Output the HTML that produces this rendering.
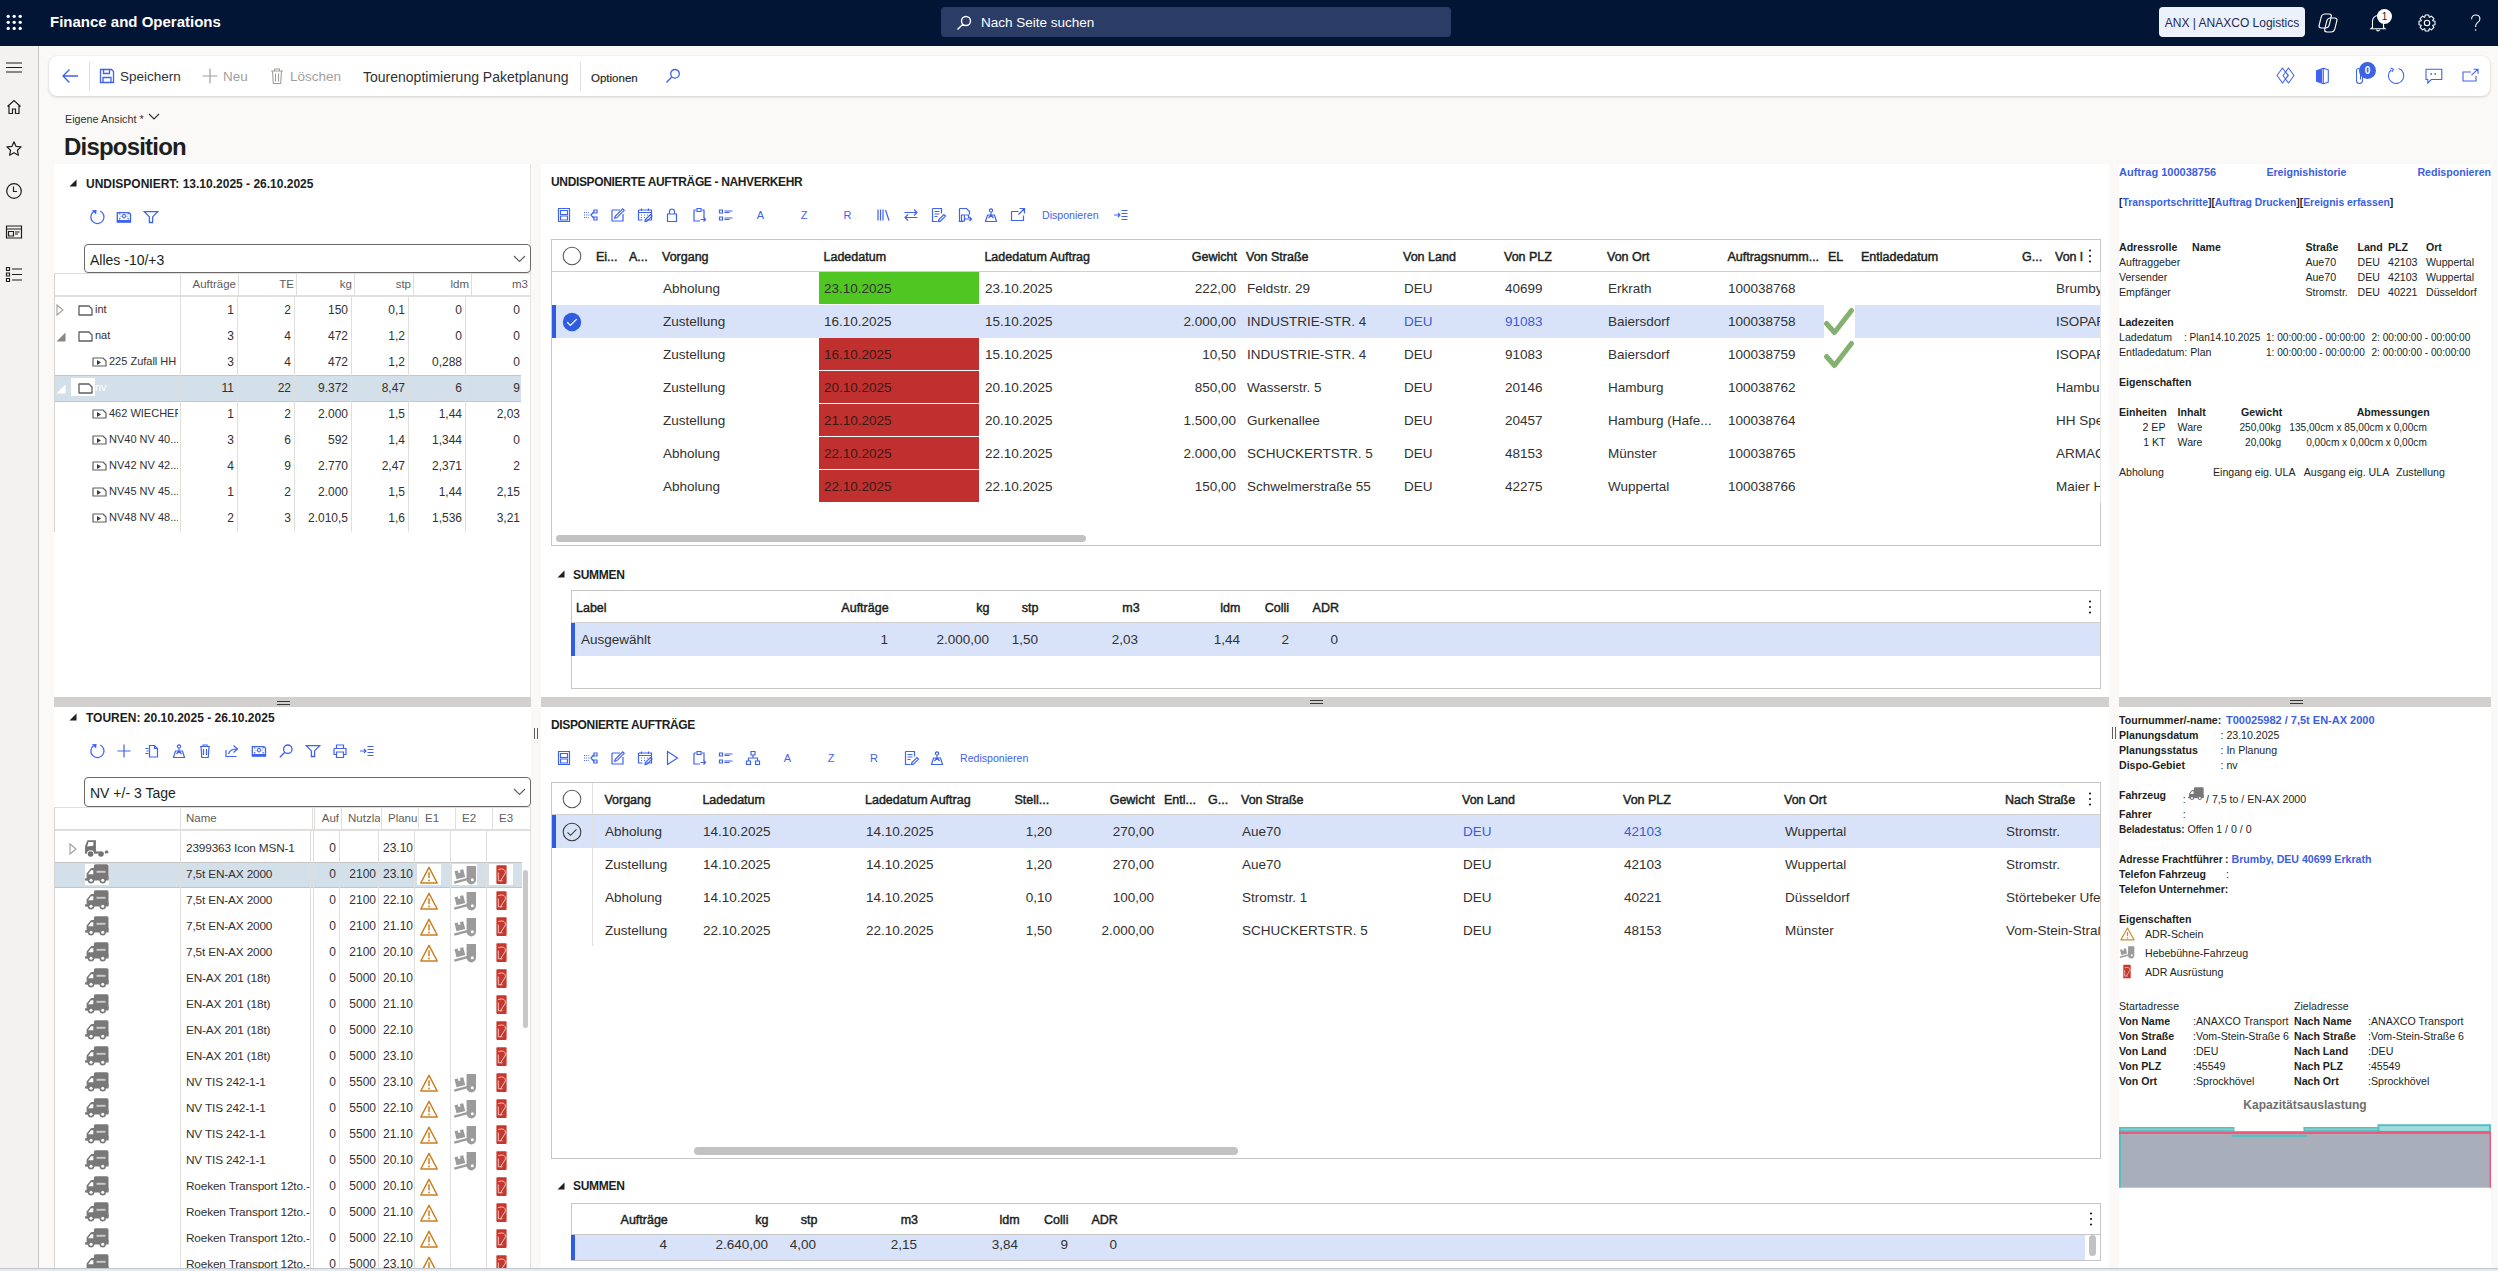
<!DOCTYPE html><html><head><meta charset="utf-8"><style>
html,body{margin:0;padding:0;}
body{width:2498px;height:1271px;overflow:hidden;position:relative;background:#faf9f8;font-family:"Liberation Sans",sans-serif;color:#323130;}
.a{position:absolute;}
.t{white-space:nowrap;}
svg.a{overflow:visible;}
</style></head><body>
<div class="a" style="left:0px;top:0px;width:2498px;height:46px;background:#021535;"></div>
<svg class="a" style="left:0px;top:0px" width="30" height="40" viewBox="0 0 30 40"><circle cx="8.2" cy="16.3" r="1.65" fill="#fff"/><circle cx="8.2" cy="22.3" r="1.65" fill="#fff"/><circle cx="8.2" cy="28.4" r="1.65" fill="#fff"/><circle cx="14.2" cy="16.3" r="1.65" fill="#fff"/><circle cx="14.2" cy="22.3" r="1.65" fill="#fff"/><circle cx="14.2" cy="28.4" r="1.65" fill="#fff"/><circle cx="20.2" cy="16.3" r="1.65" fill="#fff"/><circle cx="20.2" cy="22.3" r="1.65" fill="#fff"/><circle cx="20.2" cy="28.4" r="1.65" fill="#fff"/></svg>
<div class="a t" style="top:11.5px;line-height:20px;font-size:15px;font-weight:700;color:#ffffff;left:50px;">Finance and Operations</div>
<div class="a" style="left:941px;top:7px;width:510px;height:30px;background:#2b3c66;border-radius:4px;"></div>
<svg class="a" style="left:955px;top:14px" width="18" height="18" viewBox="0 0 18 18"><path d="M11 2.5a4.5 4.5 0 1 1 0 9a4.5 4.5 0 1 1 0-9zM7.8 10.2L2.5 15.5" fill="none" stroke="#fff" stroke-width="1.4"/></svg>
<div class="a t" style="top:12.5px;line-height:20px;font-size:13.5px;color:#ffffff;left:981px;">Nach Seite suchen</div>
<div class="a" style="left:2159px;top:7px;width:146px;height:30px;background:#ecf1fb;border-radius:4px;"></div>
<div class="a t" style="top:12.5px;line-height:20px;font-size:12px;color:#1d2a5c;left:1932px;width:600px;text-align:center;">ANX | ANAXCO Logistics</div>
<svg class="a" style="left:2319px;top:13px" width="22" height="20" viewBox="0 0 22 20"><g fill="none" stroke="#fff" stroke-width="1.15"><rect x="3.2" y="1" width="10" height="14" rx="3" transform="skewX(-14)"/><rect x="9.8" y="5" width="10" height="14" rx="3" transform="skewX(-14)"/></g></svg>
<svg class="a" style="left:2368px;top:11px" width="20" height="22" viewBox="0 0 20 22"><path d="M4.5 16.5V10a5.5 5.5 0 0 1 11 0v6.5l1.5 1.3H3z" fill="none" stroke="#fff" stroke-width="1.1"/><path d="M8.6 18.5a1.4 1.4 0 0 0 2.8 0" fill="none" stroke="#fff" stroke-width="1.1"/></svg>
<div class="a" style="left:2377px;top:9px;width:15px;height:15px;border-radius:50%;background:#fff;color:#1b1b1b;font-size:10px;line-height:15px;text-align:center">1</div>
<svg class="a" style="left:2417.4px;top:13px" width="20" height="20" viewBox="0 0 20 20"><path d="M18.00 8.21L18.00 11.79L15.80 12.18L15.65 12.56L16.92 14.39L14.39 16.92L12.56 15.65L12.18 15.80L11.79 18.00L8.21 18.00L7.82 15.80L7.44 15.65L5.61 16.92L3.08 14.39L4.35 12.56L4.20 12.18L2.00 11.79L2.00 8.21L4.20 7.82L4.35 7.44L3.08 5.61L5.61 3.08L7.44 4.35L7.82 4.20L8.21 2.00L11.79 2.00L12.18 4.20L12.56 4.35L14.39 3.08L16.92 5.61L15.65 7.44L15.80 7.82z" fill="none" stroke="#fff" stroke-width="1.1" stroke-linejoin="round"/><circle cx="10" cy="10" r="2.7" fill="none" stroke="#fff" stroke-width="1.1"/></svg>
<svg class="a" style="left:2470px;top:14px" width="12" height="18" viewBox="0 0 12 18"><path d="M1.6 5.2C1.6 2.6 3.4 1 5.7 1S9.9 2.6 9.9 5C9.9 7.2 8.4 8 7 9.1S5.6 11 5.6 13" fill="none" stroke="#fff" stroke-width="1.1"/><circle cx="5.6" cy="16" r="0.8" fill="#fff"/></svg>
<div class="a" style="left:0px;top:46px;width:39px;height:1225px;background:#f3f2f1;border-right:1px solid #c8c6c4;box-sizing:border-box;"></div>
<svg class="a" style="left:6px;top:60px" width="16" height="16" viewBox="0 0 16 16"><path d="M0 3h16M0 7.5h16M0 12h16" stroke="#201f1e" stroke-width="1.2"/></svg>
<svg class="a" style="left:6px;top:99px" width="16" height="16" viewBox="0 0 16 16"><path d="M1.5 7.5L8 1.5l6.5 6M3 6.5V14.5h3.5V10h3v4.5H13V6.5" fill="none" stroke="#201f1e" stroke-width="1.2"/></svg>
<svg class="a" style="left:5px;top:140px" width="18" height="18" viewBox="0 0 18 18"><path d="M9 1.8l2.1 4.6 5 .5-3.7 3.4 1 4.9L9 12.7l-4.4 2.5 1-4.9L1.9 6.9l5-.5z" fill="none" stroke="#201f1e" stroke-width="1.2" stroke-linejoin="round"/></svg>
<svg class="a" style="left:5px;top:182px" width="18" height="18" viewBox="0 0 18 18"><circle cx="9" cy="9" r="7.3" fill="none" stroke="#201f1e" stroke-width="1.2"/><path d="M8.5 4.5v5h3.5" fill="none" stroke="#201f1e" stroke-width="1.2"/></svg>
<svg class="a" style="left:5px;top:224px" width="18" height="16" viewBox="0 0 18 16"><path d="M1.5 2h15v12h-15zM1.5 5h15M3.5 7.5h5v4.5h-5zM10 8h4.5M10 10h3" fill="none" stroke="#201f1e" stroke-width="1.2"/></svg>
<svg class="a" style="left:5px;top:266px" width="18" height="17" viewBox="0 0 18 17"><path d="M1.5 1.5h3v3h-3zM1.5 7h3v3h-3zM1.5 12.5h3v3h-3zM7 3h10M7 8.5h10M7 14h10" fill="none" stroke="#201f1e" stroke-width="1.2"/></svg>
<div class="a" style="left:49px;top:56px;width:2441px;height:40px;background:#ffffff;border-radius:8px;box-shadow:0 1px 3px rgba(0,0,0,0.16),0 0 1px rgba(0,0,0,0.1);"></div>
<svg class="a" style="left:61px;top:68px" width="18" height="16" viewBox="0 0 18 16"><path d="M17 8H2M8.5 1.5L2 8l6.5 6.5" fill="none" stroke="#3f62ef" stroke-width="1.4"/></svg>
<div class="a" style="left:89px;top:62px;width:1px;height:29px;background:#e1dfdd;"></div>
<svg class="a" style="left:99px;top:68px" width="16" height="16" viewBox="0 0 16 16"><path d="M1.5 1.5h11l2 2v11h-13z" fill="none" stroke="#3f62ef" stroke-width="1.3"/><path d="M4.5 1.5v4h6v-4M4 14.5V9.5h8v5" fill="none" stroke="#3f62ef" stroke-width="1.3"/></svg>
<div class="a t" style="top:67.0px;line-height:20px;font-size:13.5px;color:#323130;left:120px;">Speichern</div>
<svg class="a" style="left:202px;top:68px" width="16" height="16" viewBox="0 0 16 16"><path d="M8 0.5v15M0.5 8h15" fill="none" stroke="#a19f9d" stroke-width="1.2"/></svg>
<div class="a t" style="top:67.0px;line-height:20px;font-size:13.5px;color:#a19f9d;left:223px;">Neu</div>
<svg class="a" style="left:270px;top:68px" width="14" height="16" viewBox="0 0 14 16"><path d="M1 3h12M4.5 3V1h5v2M2.5 3l.8 12.5h7.4L11.5 3M5.5 5.5v8M8.5 5.5v8" fill="none" stroke="#a19f9d" stroke-width="1.1"/></svg>
<div class="a t" style="top:67.0px;line-height:20px;font-size:13.5px;color:#a19f9d;left:290px;">Löschen</div>
<div class="a t" style="top:67.0px;line-height:20px;font-size:14px;color:#323130;left:363px;">Tourenoptimierung Paketplanung</div>
<div class="a" style="left:580px;top:62px;width:1px;height:29px;background:#e1dfdd;"></div>
<div class="a t" style="top:68.0px;line-height:20px;font-size:11.5px;color:#201f1e;left:591px;-webkit-text-stroke:0.15px #201f1e;">Optionen</div>
<svg class="a" style="left:665px;top:68px" width="16" height="16" viewBox="0 0 16 16"><path d="M10 1.5a4.3 4.3 0 1 1 0 8.6a4.3 4.3 0 1 1 0-8.6zM6.9 8.8L1.5 14.5" fill="none" stroke="#3f62ef" stroke-width="1.3"/></svg>
<svg class="a" style="left:2276px;top:67px" width="19" height="18" viewBox="0 0 19 18"><path d="M6.5 1L1 8.5l5.5 7.5 5.5-7.5zM12.5 1L7 8.5l5.5 7.5L18 8.5zM9.5 5l3 3.5-3 3.5" fill="none" stroke="#3f62ef" stroke-width="1.05" stroke-linejoin="round"/></svg>
<svg class="a" style="left:2315px;top:67px" width="15" height="18" viewBox="0 0 15 18"><path d="M1.5 3.8L8.3 1.2l5 1.6v12.4l-5 1.6-6.8-2.6z" fill="none" stroke="#3f62ef" stroke-width="1.1" stroke-linejoin="round"/><path d="M1.5 3.8L7.2 2v14L1.5 14.2z" fill="#3f62ef"/><path d="M8.3 1.2v15.6" stroke="#3f62ef" stroke-width="1.1"/></svg>
<svg class="a" style="left:2354px;top:67px" width="12" height="18" viewBox="0 0 12 18"><path d="M8.5 5v8.5a3 3 0 0 1-6 0V3.5a2 2 0 0 1 4 0v9" fill="none" stroke="#3f62ef" stroke-width="1.05"/></svg>
<div class="a" style="left:2359px;top:62px;width:17px;height:17px;border-radius:50%;background:#3d62e6;color:#fff;font-size:10px;line-height:17px;text-align:center;font-weight:700">0</div>
<svg class="a" style="left:2387px;top:67px" width="18" height="18" viewBox="0 0 18 18"><path d="M11.6 1.5A7.7 7.7 0 1 1 4.3 2.8" fill="none" stroke="#3f62ef" stroke-width="1.1"/><path d="M3.6 0.9l2.9 1.4-1.6 2.8" fill="none" stroke="#3f62ef" stroke-width="1.1"/></svg>
<svg class="a" style="left:2425px;top:68px" width="18" height="17" viewBox="0 0 18 17"><path d="M1 1.2h15.8v10.3H6.2l-3.4 3.6v-3.6H1z" fill="none" stroke="#3f62ef" stroke-width="1.1"/><path d="M6.2 5.2v1.6M10.2 5.2v1.6" stroke="#3f62ef" stroke-width="1.7"/></svg>
<svg class="a" style="left:2462px;top:68px" width="17" height="15" viewBox="0 0 17 15"><path d="M9 4H1v9h13V8M11.5 1.2h4.5v4.5M16 1.2l-6.5 6" fill="none" stroke="#3f62ef" stroke-width="1.1"/></svg>
<div class="a t" style="top:108.5px;line-height:20px;font-size:10.8px;color:#323130;left:65px;">Eigene Ansicht *</div>
<svg class="a" style="left:148px;top:113px" width="12" height="8" viewBox="0 0 12 8"><path d="M1 1l5 5 5-5" fill="none" stroke="#323130" stroke-width="1.2"/></svg>
<div class="a t" style="top:132.0px;line-height:30px;font-size:24px;font-weight:700;color:#201f1e;left:64px;letter-spacing:-0.8px;">Disposition</div>
<div class="a" style="left:54px;top:164px;width:477px;height:533px;background:#ffffff;"></div>
<div class="a" style="left:530px;top:164px;width:1px;height:533px;background:#e6e5e3;"></div>
<svg class="a" style="left:69px;top:179px" width="8" height="8" viewBox="0 0 8 8"><path d="M0.5 7.5L7.5 0.5V7.5z" fill="#201f1e"/></svg>
<div class="a t" style="top:173.5px;line-height:20px;font-size:12px;font-weight:700;color:#201f1e;left:86px;">UNDISPONIERT: 13.10.2025 - 26.10.2025</div>
<svg class="a" style="left:88.5px;top:209.0px" width="16" height="16" viewBox="0 0 16 16"><path d="M11.2 2A6.6 6.6 0 1 1 4.6 2.6" fill="none" stroke="#3f62ef" stroke-width="1.25" /><path d="M2.8 1.2L7.6 0.9L7.1 5.4z" fill="#3f62ef"/></svg>
<svg class="a" style="left:116.0px;top:209.0px" width="16" height="16" viewBox="0 0 16 16"><path d="M1.3 3.6h11.6l1.6 1.4v8.1H1.3z" fill="none" stroke="#3f62ef" stroke-width="1.3" /><path d="M1.3 11h13.2v2.3H1.3z" fill="#3f62ef"/><path d="M8 5.3c1 0 1.4.8 1.4 1.9S9 9 8 9 6.6 8.3 6.6 7.2 7 5.3 8 5.3z" fill="none" stroke="#3f62ef" stroke-width="1.1" /><path d="M3.2 4.3l1 1.2M12.6 4.3l-1 1.2M3.2 10.3l1-1.2M12.6 10.3l-1-1.2" fill="none" stroke="#3f62ef" stroke-width="1.1" /><path d="M4.5 6.8h1v1h-1zM10.5 6.8h1v1h-1z" fill="#3f62ef"/></svg>
<svg class="a" style="left:143.0px;top:209.0px" width="16" height="16" viewBox="0 0 16 16"><path d="M1.3 2.6h13.4L9.6 7.9v5.6H6.4V7.9z" fill="none" stroke="#3f62ef" stroke-width="1.3" /></svg>
<div class="a" style="left:84px;top:244px;width:447px;height:29px;background:#fff;box-sizing:border-box;border:1px solid #6b6a69;border-radius:4px;"></div>
<div class="a t" style="top:249.5px;line-height:20px;font-size:14px;color:#201f1e;left:90px;">Alles -10/+3</div>
<svg class="a" style="left:513px;top:254.5px" width="13" height="8" viewBox="0 0 13 8"><path d="M1 1l5.5 5.5L12 1" fill="none" stroke="#605e5c" stroke-width="1.1"/></svg>
<div class="a" style="left:180px;top:274px;width:1px;height:22px;background:#e1dfdd;"></div>
<div class="a" style="left:238px;top:274px;width:1px;height:22px;background:#e1dfdd;"></div>
<div class="a" style="left:296px;top:274px;width:1px;height:22px;background:#e1dfdd;"></div>
<div class="a" style="left:354px;top:274px;width:1px;height:22px;background:#e1dfdd;"></div>
<div class="a" style="left:413px;top:274px;width:1px;height:22px;background:#e1dfdd;"></div>
<div class="a" style="left:471px;top:274px;width:1px;height:22px;background:#e1dfdd;"></div>
<div class="a" style="left:54px;top:295px;width:477px;height:2px;background:#e1dfdd;"></div>
<div class="a" style="left:54px;top:273px;width:477px;height:1px;background:#e1dfdd;"></div>
<div class="a" style="left:54px;top:274px;width:1px;height:258px;background:#d6d4d2;"></div>
<div class="a t" style="top:273.8px;line-height:20px;font-size:11.5px;color:#605e5c;right:2262px;text-align:right;">Aufträge</div>
<div class="a t" style="top:273.8px;line-height:20px;font-size:11.5px;color:#605e5c;right:2204px;text-align:right;">TE</div>
<div class="a t" style="top:273.8px;line-height:20px;font-size:11.5px;color:#605e5c;right:2146px;text-align:right;">kg</div>
<div class="a t" style="top:273.8px;line-height:20px;font-size:11.5px;color:#605e5c;right:2087px;text-align:right;">stp</div>
<div class="a t" style="top:273.8px;line-height:20px;font-size:11.5px;color:#605e5c;right:2029px;text-align:right;">ldm</div>
<div class="a t" style="top:273.8px;line-height:20px;font-size:11.5px;color:#605e5c;right:1970px;text-align:right;">m3</div>
<svg class="a" style="left:56px;top:303.5px" width="8" height="12" viewBox="0 0 8 12"><path d="M1 1l6 5-6 5z" fill="none" stroke="#a19f9d" stroke-width="1.1"/></svg>
<svg class="a" style="left:78px;top:304.5px" width="15" height="11" viewBox="0 0 15 11"><path d="M1 1h10l3 3v6H1z" fill="none" stroke="#5f5f5f" stroke-width="1.3" stroke-linejoin="round"/></svg>
<div class="a t" style="top:299.0px;line-height:20px;font-size:11px;color:#323130;left:95px;">int</div>
<div class="a t" style="top:299.5px;line-height:20px;font-size:12px;color:#323130;right:2264px;text-align:right;">1</div>
<div class="a t" style="top:299.5px;line-height:20px;font-size:12px;color:#323130;right:2207px;text-align:right;">2</div>
<div class="a t" style="top:299.5px;line-height:20px;font-size:12px;color:#323130;right:2150px;text-align:right;">150</div>
<div class="a t" style="top:299.5px;line-height:20px;font-size:12px;color:#323130;right:2093px;text-align:right;">0,1</div>
<div class="a t" style="top:299.5px;line-height:20px;font-size:12px;color:#323130;right:2036px;text-align:right;">0</div>
<div class="a t" style="top:299.5px;line-height:20px;font-size:12px;color:#323130;right:1978px;text-align:right;">0</div>
<svg class="a" style="left:56px;top:331.5px" width="10" height="10" viewBox="0 0 10 10"><path d="M0.5 9.5L9.5 0.5V9.5z" fill="#8a8886"/></svg>
<svg class="a" style="left:78px;top:330.5px" width="15" height="11" viewBox="0 0 15 11"><path d="M1 1h10l3 3v6H1z" fill="none" stroke="#5f5f5f" stroke-width="1.3" stroke-linejoin="round"/></svg>
<div class="a t" style="top:325.0px;line-height:20px;font-size:11px;color:#323130;left:95px;">nat</div>
<div class="a t" style="top:325.5px;line-height:20px;font-size:12px;color:#323130;right:2264px;text-align:right;">3</div>
<div class="a t" style="top:325.5px;line-height:20px;font-size:12px;color:#323130;right:2207px;text-align:right;">4</div>
<div class="a t" style="top:325.5px;line-height:20px;font-size:12px;color:#323130;right:2150px;text-align:right;">472</div>
<div class="a t" style="top:325.5px;line-height:20px;font-size:12px;color:#323130;right:2093px;text-align:right;">1,2</div>
<div class="a t" style="top:325.5px;line-height:20px;font-size:12px;color:#323130;right:2036px;text-align:right;">0</div>
<div class="a t" style="top:325.5px;line-height:20px;font-size:12px;color:#323130;right:1978px;text-align:right;">0</div>
<svg class="a" style="left:92px;top:356.5px" width="15" height="10" viewBox="0 0 15 10"><path d="M1 1h10l3 3v5H1z" fill="none" stroke="#5f5f5f" stroke-width="1.2" stroke-linejoin="round"/><path d="M5 3l4 2.5-4 2.5z" fill="#3b3b3b"/></svg>
<div class="a t" style="left:109px;top:351.0px;line-height:20px;font-size:11px;color:#323130;width:69px;overflow:hidden">225 Zufall HH</div>
<div class="a t" style="top:351.5px;line-height:20px;font-size:12px;color:#323130;right:2264px;text-align:right;">3</div>
<div class="a t" style="top:351.5px;line-height:20px;font-size:12px;color:#323130;right:2207px;text-align:right;">4</div>
<div class="a t" style="top:351.5px;line-height:20px;font-size:12px;color:#323130;right:2150px;text-align:right;">472</div>
<div class="a t" style="top:351.5px;line-height:20px;font-size:12px;color:#323130;right:2093px;text-align:right;">1,2</div>
<div class="a t" style="top:351.5px;line-height:20px;font-size:12px;color:#323130;right:2036px;text-align:right;">0,288</div>
<div class="a t" style="top:351.5px;line-height:20px;font-size:12px;color:#323130;right:1978px;text-align:right;">0</div>
<div class="a" style="left:55px;top:375.0px;width:466px;height:27.0px;background:#d3e0ea;border-top:1px solid #c8c6c4;border-bottom:1px solid #c8c6c4;box-sizing:border-box;"></div>
<div class="a" style="left:71px;top:378.0px;width:24px;height:18.0px;background:#ffffff;"></div>
<svg class="a" style="left:56px;top:383.5px" width="10" height="10" viewBox="0 0 10 10"><path d="M0.5 9.5L9.5 0.5V9.5z" fill="#ffffff"/></svg>
<svg class="a" style="left:78px;top:382.5px" width="15" height="11" viewBox="0 0 15 11"><path d="M1 1h10l3 3v6H1z" fill="none" stroke="#5f5f5f" stroke-width="1.3" stroke-linejoin="round"/></svg>
<div class="a t" style="top:377.0px;line-height:20px;font-size:11px;color:#ffffff;left:95px;">nv</div>
<div class="a t" style="top:377.5px;line-height:20px;font-size:12px;color:#323130;right:2264px;text-align:right;">11</div>
<div class="a t" style="top:377.5px;line-height:20px;font-size:12px;color:#323130;right:2207px;text-align:right;">22</div>
<div class="a t" style="top:377.5px;line-height:20px;font-size:12px;color:#323130;right:2150px;text-align:right;">9.372</div>
<div class="a t" style="top:377.5px;line-height:20px;font-size:12px;color:#323130;right:2093px;text-align:right;">8,47</div>
<div class="a t" style="top:377.5px;line-height:20px;font-size:12px;color:#323130;right:2036px;text-align:right;">6</div>
<div class="a t" style="top:377.5px;line-height:20px;font-size:12px;color:#323130;right:1978px;text-align:right;">9</div>
<svg class="a" style="left:92px;top:408.5px" width="15" height="10" viewBox="0 0 15 10"><path d="M1 1h10l3 3v5H1z" fill="none" stroke="#5f5f5f" stroke-width="1.2" stroke-linejoin="round"/><path d="M5 3l4 2.5-4 2.5z" fill="#3b3b3b"/></svg>
<div class="a t" style="left:109px;top:403.0px;line-height:20px;font-size:11px;color:#323130;width:69px;overflow:hidden">462 WIECHERS</div>
<div class="a t" style="top:403.5px;line-height:20px;font-size:12px;color:#323130;right:2264px;text-align:right;">1</div>
<div class="a t" style="top:403.5px;line-height:20px;font-size:12px;color:#323130;right:2207px;text-align:right;">2</div>
<div class="a t" style="top:403.5px;line-height:20px;font-size:12px;color:#323130;right:2150px;text-align:right;">2.000</div>
<div class="a t" style="top:403.5px;line-height:20px;font-size:12px;color:#323130;right:2093px;text-align:right;">1,5</div>
<div class="a t" style="top:403.5px;line-height:20px;font-size:12px;color:#323130;right:2036px;text-align:right;">1,44</div>
<div class="a t" style="top:403.5px;line-height:20px;font-size:12px;color:#323130;right:1978px;text-align:right;">2,03</div>
<svg class="a" style="left:92px;top:434.5px" width="15" height="10" viewBox="0 0 15 10"><path d="M1 1h10l3 3v5H1z" fill="none" stroke="#5f5f5f" stroke-width="1.2" stroke-linejoin="round"/><path d="M5 3l4 2.5-4 2.5z" fill="#3b3b3b"/></svg>
<div class="a t" style="left:109px;top:429.0px;line-height:20px;font-size:11px;color:#323130;width:69px;overflow:hidden">NV40 NV 40...\</div>
<div class="a t" style="top:429.5px;line-height:20px;font-size:12px;color:#323130;right:2264px;text-align:right;">3</div>
<div class="a t" style="top:429.5px;line-height:20px;font-size:12px;color:#323130;right:2207px;text-align:right;">6</div>
<div class="a t" style="top:429.5px;line-height:20px;font-size:12px;color:#323130;right:2150px;text-align:right;">592</div>
<div class="a t" style="top:429.5px;line-height:20px;font-size:12px;color:#323130;right:2093px;text-align:right;">1,4</div>
<div class="a t" style="top:429.5px;line-height:20px;font-size:12px;color:#323130;right:2036px;text-align:right;">1,344</div>
<div class="a t" style="top:429.5px;line-height:20px;font-size:12px;color:#323130;right:1978px;text-align:right;">0</div>
<svg class="a" style="left:92px;top:460.5px" width="15" height="10" viewBox="0 0 15 10"><path d="M1 1h10l3 3v5H1z" fill="none" stroke="#5f5f5f" stroke-width="1.2" stroke-linejoin="round"/><path d="M5 3l4 2.5-4 2.5z" fill="#3b3b3b"/></svg>
<div class="a t" style="left:109px;top:455.0px;line-height:20px;font-size:11px;color:#323130;width:69px;overflow:hidden">NV42 NV 42...\</div>
<div class="a t" style="top:455.5px;line-height:20px;font-size:12px;color:#323130;right:2264px;text-align:right;">4</div>
<div class="a t" style="top:455.5px;line-height:20px;font-size:12px;color:#323130;right:2207px;text-align:right;">9</div>
<div class="a t" style="top:455.5px;line-height:20px;font-size:12px;color:#323130;right:2150px;text-align:right;">2.770</div>
<div class="a t" style="top:455.5px;line-height:20px;font-size:12px;color:#323130;right:2093px;text-align:right;">2,47</div>
<div class="a t" style="top:455.5px;line-height:20px;font-size:12px;color:#323130;right:2036px;text-align:right;">2,371</div>
<div class="a t" style="top:455.5px;line-height:20px;font-size:12px;color:#323130;right:1978px;text-align:right;">2</div>
<svg class="a" style="left:92px;top:486.5px" width="15" height="10" viewBox="0 0 15 10"><path d="M1 1h10l3 3v5H1z" fill="none" stroke="#5f5f5f" stroke-width="1.2" stroke-linejoin="round"/><path d="M5 3l4 2.5-4 2.5z" fill="#3b3b3b"/></svg>
<div class="a t" style="left:109px;top:481.0px;line-height:20px;font-size:11px;color:#323130;width:69px;overflow:hidden">NV45 NV 45...N</div>
<div class="a t" style="top:481.5px;line-height:20px;font-size:12px;color:#323130;right:2264px;text-align:right;">1</div>
<div class="a t" style="top:481.5px;line-height:20px;font-size:12px;color:#323130;right:2207px;text-align:right;">2</div>
<div class="a t" style="top:481.5px;line-height:20px;font-size:12px;color:#323130;right:2150px;text-align:right;">2.000</div>
<div class="a t" style="top:481.5px;line-height:20px;font-size:12px;color:#323130;right:2093px;text-align:right;">1,5</div>
<div class="a t" style="top:481.5px;line-height:20px;font-size:12px;color:#323130;right:2036px;text-align:right;">1,44</div>
<div class="a t" style="top:481.5px;line-height:20px;font-size:12px;color:#323130;right:1978px;text-align:right;">2,15</div>
<svg class="a" style="left:92px;top:512.5px" width="15" height="10" viewBox="0 0 15 10"><path d="M1 1h10l3 3v5H1z" fill="none" stroke="#5f5f5f" stroke-width="1.2" stroke-linejoin="round"/><path d="M5 3l4 2.5-4 2.5z" fill="#3b3b3b"/></svg>
<div class="a t" style="left:109px;top:507.0px;line-height:20px;font-size:11px;color:#323130;width:69px;overflow:hidden">NV48 NV 48...N</div>
<div class="a t" style="top:507.5px;line-height:20px;font-size:12px;color:#323130;right:2264px;text-align:right;">2</div>
<div class="a t" style="top:507.5px;line-height:20px;font-size:12px;color:#323130;right:2207px;text-align:right;">3</div>
<div class="a t" style="top:507.5px;line-height:20px;font-size:12px;color:#323130;right:2150px;text-align:right;">2.010,5</div>
<div class="a t" style="top:507.5px;line-height:20px;font-size:12px;color:#323130;right:2093px;text-align:right;">1,6</div>
<div class="a t" style="top:507.5px;line-height:20px;font-size:12px;color:#323130;right:2036px;text-align:right;">1,536</div>
<div class="a t" style="top:507.5px;line-height:20px;font-size:12px;color:#323130;right:1978px;text-align:right;">3,21</div>
<div class="a" style="left:180px;top:297px;width:1px;height:235px;background:#e1dfdd;"></div>
<div class="a" style="left:237px;top:297px;width:1px;height:235px;background:#e1dfdd;"></div>
<div class="a" style="left:294px;top:297px;width:1px;height:235px;background:#e1dfdd;"></div>
<div class="a" style="left:351px;top:297px;width:1px;height:235px;background:#e1dfdd;"></div>
<div class="a" style="left:408px;top:297px;width:1px;height:235px;background:#e1dfdd;"></div>
<div class="a" style="left:465px;top:297px;width:1px;height:235px;background:#e1dfdd;"></div>
<div class="a" style="left:54px;top:697px;width:477px;height:10px;background:#d2d0ce;"></div>
<div class="a" style="left:277px;top:700.5px;width:13px;height:1.0px;background:#3b3a39;"></div>
<div class="a" style="left:277px;top:703.5px;width:13px;height:1.0px;background:#3b3a39;"></div>
<div class="a" style="left:54px;top:707px;width:477px;height:561px;background:#ffffff;"></div>
<div class="a" style="left:534px;top:728px;width:1px;height:11px;background:#605e5c;"></div>
<div class="a" style="left:536.5px;top:728px;width:1.0px;height:11px;background:#605e5c;"></div>
<svg class="a" style="left:69px;top:713px" width="8" height="8" viewBox="0 0 8 8"><path d="M0.5 7.5L7.5 0.5V7.5z" fill="#201f1e"/></svg>
<div class="a t" style="top:707.5px;line-height:20px;font-size:12px;font-weight:700;color:#201f1e;left:86px;">TOUREN: 20.10.2025 - 26.10.2025</div>
<svg class="a" style="left:88.8px;top:743.0px" width="16" height="16" viewBox="0 0 16 16"><path d="M11.2 2A6.6 6.6 0 1 1 4.6 2.6" fill="none" stroke="#3f62ef" stroke-width="1.25" /><path d="M2.8 1.2L7.6 0.9L7.1 5.4z" fill="#3f62ef"/></svg>
<svg class="a" style="left:116.0px;top:743.0px" width="16" height="16" viewBox="0 0 16 16"><path d="M8 1.5v13M1.5 8h13" fill="none" stroke="#3f62ef" stroke-width="1.2" /></svg>
<svg class="a" style="left:143.6px;top:743.0px" width="16" height="16" viewBox="0 0 16 16"><path d="M5.5 2.5h5l3 3v8.5h-8z" fill="none" stroke="#3f62ef" stroke-width="1.2" /><path d="M10.5 2.5v3h3" fill="none" stroke="#3f62ef" stroke-width="1.2" /><path d="M1.5 5.5h3M2.5 8h2M1.5 10.5h3" fill="none" stroke="#3f62ef" stroke-width="1" /></svg>
<svg class="a" style="left:170.5px;top:743.0px" width="16" height="16" viewBox="0 0 16 16"><path d="M8 1.8a1.6 1.6 0 1 0 .01 0M8 5v3M4.5 8h7l2 6.5h-11zM5.5 11l2.5-3 2.5 3" fill="none" stroke="#3f62ef" stroke-width="1.2" /></svg>
<svg class="a" style="left:197.0px;top:743.0px" width="16" height="16" viewBox="0 0 16 16"><path d="M3 3.5h10M6 3.5V2h4v1.5M4 3.5l.8 11h6.4l.8-11M6.5 6v6M9.5 6v6" fill="none" stroke="#3f62ef" stroke-width="1.2" /></svg>
<svg class="a" style="left:223.7px;top:743.0px" width="16" height="16" viewBox="0 0 16 16"><path d="M2 7v6.5h10.5M9.5 2.5l4 3.5-4 3.5M13.5 6C9 6 5.5 7 4.5 11" fill="none" stroke="#3f62ef" stroke-width="1.2" /></svg>
<svg class="a" style="left:251.0px;top:743.0px" width="16" height="16" viewBox="0 0 16 16"><path d="M1.3 3.6h11.6l1.6 1.4v8.1H1.3z" fill="none" stroke="#3f62ef" stroke-width="1.3" /><path d="M1.3 11h13.2v2.3H1.3z" fill="#3f62ef"/><path d="M8 5.3c1 0 1.4.8 1.4 1.9S9 9 8 9 6.6 8.3 6.6 7.2 7 5.3 8 5.3z" fill="none" stroke="#3f62ef" stroke-width="1.1" /><path d="M3.2 4.3l1 1.2M12.6 4.3l-1 1.2M3.2 10.3l1-1.2M12.6 10.3l-1-1.2" fill="none" stroke="#3f62ef" stroke-width="1.1" /><path d="M4.5 6.8h1v1h-1zM10.5 6.8h1v1h-1z" fill="#3f62ef"/></svg>
<svg class="a" style="left:277.6px;top:743.0px" width="16" height="16" viewBox="0 0 16 16"><path d="M9.8 2a4.2 4.2 0 1 1 0 8.4a4.2 4.2 0 1 1 0-8.4zM6.8 9.2L1.8 14.2" fill="none" stroke="#3f62ef" stroke-width="1.3" /></svg>
<svg class="a" style="left:305.0px;top:743.0px" width="16" height="16" viewBox="0 0 16 16"><path d="M1.3 2.6h13.4L9.6 7.9v5.6H6.4V7.9z" fill="none" stroke="#3f62ef" stroke-width="1.3" /></svg>
<svg class="a" style="left:332.0px;top:743.0px" width="16" height="16" viewBox="0 0 16 16"><path d="M4.5 5.5V2h7v3.5M2 5.5h12v6h-2.5M4.5 11.5H2v-6M4.5 9h7v5.5h-7z" fill="none" stroke="#3f62ef" stroke-width="1.2" /></svg>
<svg class="a" style="left:359.0px;top:743.0px" width="16" height="16" viewBox="0 0 16 16"><path d="M1 8h6M5 6l2 2-2 2" fill="none" stroke="#3f62ef" stroke-width="1.1" /><path d="M8.5 3.5h6M8.5 6.5h6M8.5 9.5h6M8.5 12.5h6" fill="none" stroke="#3f62ef" stroke-width="1.1" /></svg>
<div class="a" style="left:84px;top:777px;width:447px;height:30px;background:#fff;box-sizing:border-box;border:1px solid #6b6a69;border-radius:4px;"></div>
<div class="a t" style="top:783.0px;line-height:20px;font-size:14px;color:#201f1e;left:90px;">NV +/- 3 Tage</div>
<svg class="a" style="left:513px;top:788.0px" width="13" height="8" viewBox="0 0 13 8"><path d="M1 1l5.5 5.5L12 1" fill="none" stroke="#605e5c" stroke-width="1.1"/></svg>
<div class="a" style="left:180px;top:808px;width:1px;height:22px;background:#e1dfdd;"></div>
<div class="a" style="left:312px;top:808px;width:1px;height:22px;background:#e1dfdd;"></div>
<div class="a" style="left:314px;top:808px;width:1px;height:22px;background:#e1dfdd;"></div>
<div class="a" style="left:341px;top:808px;width:1px;height:22px;background:#e1dfdd;"></div>
<div class="a" style="left:381px;top:808px;width:1px;height:22px;background:#e1dfdd;"></div>
<div class="a" style="left:418px;top:808px;width:1px;height:22px;background:#e1dfdd;"></div>
<div class="a" style="left:455px;top:808px;width:1px;height:22px;background:#e1dfdd;"></div>
<div class="a" style="left:492px;top:808px;width:1px;height:22px;background:#e1dfdd;"></div>
<div class="a" style="left:54px;top:829px;width:477px;height:2px;background:#e1dfdd;"></div>
<div class="a" style="left:54px;top:807px;width:477px;height:1px;background:#e1dfdd;"></div>
<div class="a" style="left:530px;top:807px;width:1px;height:461px;background:#e1dfdd;"></div>
<div class="a" style="left:54px;top:808px;width:1px;height:460px;background:#d6d4d2;"></div>
<div class="a t" style="top:808.0px;line-height:20px;font-size:11.5px;color:#605e5c;left:186px;">Name</div>
<div class="a t" style="left:315px;top:808px;line-height:20px;font-size:11.5px;color:#605e5c;width:24px;overflow:hidden;text-align:right">Auf</div>
<div class="a t" style="left:348px;top:808px;line-height:20px;font-size:11.5px;color:#605e5c;width:32px;overflow:hidden">Nutzla</div>
<div class="a t" style="left:388px;top:808px;line-height:20px;font-size:11.5px;color:#605e5c;width:29px;overflow:hidden">Planu</div>
<div class="a t" style="top:808.0px;line-height:20px;font-size:11.5px;color:#605e5c;left:425px;">E1</div>
<div class="a t" style="top:808.0px;line-height:20px;font-size:11.5px;color:#605e5c;left:462px;">E2</div>
<div class="a t" style="top:808.0px;line-height:20px;font-size:11.5px;color:#605e5c;left:499px;">E3</div>
<svg class="a" style="left:69px;top:842.5px" width="8" height="12" viewBox="0 0 8 12"><path d="M1 1l6 5-6 5z" fill="none" stroke="#a19f9d" stroke-width="1.1"/></svg>
<svg class="a" style="left:84px;top:838.5px" width="26" height="20" viewBox="0 0 26 20"><path d="M1.1 14.8V7.2L3.3 1.6Q3.6 1.2 4.3 1.2H11.9V12.6H14.2V14.8z" fill="#727272"/><path d="M3.1 7.4L4.5 3H9.4V6.8z" fill="#fff"/><circle cx="6.6" cy="15" r="3.7" fill="#fff"/><circle cx="6.6" cy="15" r="2.8" fill="#727272"/><circle cx="17" cy="15" r="3.7" fill="#fff"/><circle cx="17" cy="15" r="2.8" fill="#727272"/><path d="M12.5 12.6l1.5 2.5 1.3-2.5z" fill="#727272"/><path d="M20.6 12.8l2.4-1.8 1.6 2.2-.6 1-2.9.2z" fill="#727272"/></svg>
<div class="a t" style="left:186px;top:837.7px;line-height:20px;font-size:11.8px;letter-spacing:-0.15px;color:#323130;width:124px;overflow:hidden">2399363 Icon MSN-1</div>
<div class="a t" style="top:837.7px;line-height:20px;font-size:12px;color:#323130;right:2162px;text-align:right;">0</div>
<div class="a t" style="top:837.7px;line-height:20px;font-size:12px;color:#323130;right:2085px;text-align:right;">23.10</div>
<div class="a" style="left:55px;top:861.5px;width:467px;height:26.0px;background:#d3e0ea;border-top:1px solid #c8c6c4;border-bottom:1px solid #c8c6c4;box-sizing:border-box;"></div>
<div class="a" style="left:84.5px;top:864.0px;width:24.5px;height:21.0px;background:#ffffff;"></div>
<div class="a" style="left:417px;top:864.0px;width:24px;height:21.0px;background:#ffffff;"></div>
<div class="a" style="left:452px;top:864.0px;width:25px;height:21.0px;background:#ffffff;"></div>
<div class="a" style="left:489px;top:864.0px;width:24px;height:21.0px;background:#ffffff;"></div>
<svg class="a" style="left:85px;top:864.0px" width="24" height="22" viewBox="0 0 24 22"><rect x="8.9" y="0.3" width="14.6" height="15.6" rx="1.6" fill="#787878"/><path d="M1.6 16.5V9.6L5.2 5.1Q5.9 4.1 7.1 4.1H9.5V16.5z" fill="#787878"/><rect x="8" y="12" width="15.5" height="4.5" fill="#787878"/><rect x="0" y="14.3" width="3" height="2.2" fill="#787878"/><path d="M3.1 10.2L6 6.3H8.3V10.2z" fill="#fff"/><circle cx="6" cy="16.2" r="3.2" fill="#787878"/><circle cx="17.7" cy="16.2" r="3.2" fill="#787878"/><circle cx="6" cy="16.2" r="1.5" fill="#fff"/><circle cx="17.7" cy="16.2" r="1.5" fill="#fff"/><rect x="11.5" y="6.8" width="9" height="2" fill="#c9c9c9"/></svg>
<div class="a t" style="left:186px;top:863.7px;line-height:20px;font-size:11.8px;letter-spacing:-0.15px;color:#323130;width:124px;overflow:hidden">7,5t EN-AX 2000</div>
<div class="a t" style="top:863.7px;line-height:20px;font-size:12px;color:#323130;right:2162px;text-align:right;">0</div>
<div class="a t" style="top:863.7px;line-height:20px;font-size:12px;color:#323130;right:2122px;text-align:right;">2100</div>
<div class="a t" style="top:863.7px;line-height:20px;font-size:12px;color:#323130;right:2085px;text-align:right;">23.10</div>
<svg class="a" style="left:419.6px;top:865.5px" width="18" height="18" viewBox="0 0 18 18"><path d="M9 1.3L17.2 17H0.8z" fill="none" stroke="#cc7f22" stroke-width="1.5" stroke-linejoin="round"/><path d="M9 6.3v6" stroke="#cc7f22" stroke-width="1.5"/><circle cx="9" cy="14.4" r="0.9" fill="#cc7f22"/></svg>
<svg class="a" style="left:453px;top:865.5px" width="24" height="19" viewBox="0 0 24 19"><path d="M13.6 0h9.4v13.8a4.7 4.7 0 0 1-9.4 0z" fill="#9b9b9b"/><circle cx="19.3" cy="13.8" r="1.5" fill="#fff"/><path d="M1 15.6L14 12l.6 2.2L1.6 17.8z" fill="#9b9b9b"/><path d="M1.5 5.3l3.3-.8.7 2.4 2-.5-.6-2.4 3.3-.8 2 7.8-8.7 2.2z" fill="#9b9b9b"/></svg>
<svg class="a" style="left:495.5px;top:865.0px" width="11" height="19" viewBox="0 0 11 19"><rect x="0.4" y="0.3" width="10.2" height="18.6" rx="0.8" fill="#c9372c"/><path d="M2.2 4.5Q9.8 2.5 9.5 8L4.5 15.8M2.3 7.5v8.3h4.2" fill="none" stroke="#f3d0cc" stroke-width="0.9"/></svg>
<svg class="a" style="left:85px;top:890.0px" width="24" height="22" viewBox="0 0 24 22"><rect x="8.9" y="0.3" width="14.6" height="15.6" rx="1.6" fill="#787878"/><path d="M1.6 16.5V9.6L5.2 5.1Q5.9 4.1 7.1 4.1H9.5V16.5z" fill="#787878"/><rect x="8" y="12" width="15.5" height="4.5" fill="#787878"/><rect x="0" y="14.3" width="3" height="2.2" fill="#787878"/><path d="M3.1 10.2L6 6.3H8.3V10.2z" fill="#fff"/><circle cx="6" cy="16.2" r="3.2" fill="#787878"/><circle cx="17.7" cy="16.2" r="3.2" fill="#787878"/><circle cx="6" cy="16.2" r="1.5" fill="#fff"/><circle cx="17.7" cy="16.2" r="1.5" fill="#fff"/><rect x="11.5" y="6.8" width="9" height="2" fill="#c9c9c9"/></svg>
<div class="a t" style="left:186px;top:889.7px;line-height:20px;font-size:11.8px;letter-spacing:-0.15px;color:#323130;width:124px;overflow:hidden">7,5t EN-AX 2000</div>
<div class="a t" style="top:889.7px;line-height:20px;font-size:12px;color:#323130;right:2162px;text-align:right;">0</div>
<div class="a t" style="top:889.7px;line-height:20px;font-size:12px;color:#323130;right:2122px;text-align:right;">2100</div>
<div class="a t" style="top:889.7px;line-height:20px;font-size:12px;color:#323130;right:2085px;text-align:right;">22.10</div>
<svg class="a" style="left:419.6px;top:891.5px" width="18" height="18" viewBox="0 0 18 18"><path d="M9 1.3L17.2 17H0.8z" fill="none" stroke="#cc7f22" stroke-width="1.5" stroke-linejoin="round"/><path d="M9 6.3v6" stroke="#cc7f22" stroke-width="1.5"/><circle cx="9" cy="14.4" r="0.9" fill="#cc7f22"/></svg>
<svg class="a" style="left:453px;top:891.5px" width="24" height="19" viewBox="0 0 24 19"><path d="M13.6 0h9.4v13.8a4.7 4.7 0 0 1-9.4 0z" fill="#9b9b9b"/><circle cx="19.3" cy="13.8" r="1.5" fill="#fff"/><path d="M1 15.6L14 12l.6 2.2L1.6 17.8z" fill="#9b9b9b"/><path d="M1.5 5.3l3.3-.8.7 2.4 2-.5-.6-2.4 3.3-.8 2 7.8-8.7 2.2z" fill="#9b9b9b"/></svg>
<svg class="a" style="left:495.5px;top:891.0px" width="11" height="19" viewBox="0 0 11 19"><rect x="0.4" y="0.3" width="10.2" height="18.6" rx="0.8" fill="#c9372c"/><path d="M2.2 4.5Q9.8 2.5 9.5 8L4.5 15.8M2.3 7.5v8.3h4.2" fill="none" stroke="#f3d0cc" stroke-width="0.9"/></svg>
<svg class="a" style="left:85px;top:916.0px" width="24" height="22" viewBox="0 0 24 22"><rect x="8.9" y="0.3" width="14.6" height="15.6" rx="1.6" fill="#787878"/><path d="M1.6 16.5V9.6L5.2 5.1Q5.9 4.1 7.1 4.1H9.5V16.5z" fill="#787878"/><rect x="8" y="12" width="15.5" height="4.5" fill="#787878"/><rect x="0" y="14.3" width="3" height="2.2" fill="#787878"/><path d="M3.1 10.2L6 6.3H8.3V10.2z" fill="#fff"/><circle cx="6" cy="16.2" r="3.2" fill="#787878"/><circle cx="17.7" cy="16.2" r="3.2" fill="#787878"/><circle cx="6" cy="16.2" r="1.5" fill="#fff"/><circle cx="17.7" cy="16.2" r="1.5" fill="#fff"/><rect x="11.5" y="6.8" width="9" height="2" fill="#c9c9c9"/></svg>
<div class="a t" style="left:186px;top:915.7px;line-height:20px;font-size:11.8px;letter-spacing:-0.15px;color:#323130;width:124px;overflow:hidden">7,5t EN-AX 2000</div>
<div class="a t" style="top:915.7px;line-height:20px;font-size:12px;color:#323130;right:2162px;text-align:right;">0</div>
<div class="a t" style="top:915.7px;line-height:20px;font-size:12px;color:#323130;right:2122px;text-align:right;">2100</div>
<div class="a t" style="top:915.7px;line-height:20px;font-size:12px;color:#323130;right:2085px;text-align:right;">21.10</div>
<svg class="a" style="left:419.6px;top:917.5px" width="18" height="18" viewBox="0 0 18 18"><path d="M9 1.3L17.2 17H0.8z" fill="none" stroke="#cc7f22" stroke-width="1.5" stroke-linejoin="round"/><path d="M9 6.3v6" stroke="#cc7f22" stroke-width="1.5"/><circle cx="9" cy="14.4" r="0.9" fill="#cc7f22"/></svg>
<svg class="a" style="left:453px;top:917.5px" width="24" height="19" viewBox="0 0 24 19"><path d="M13.6 0h9.4v13.8a4.7 4.7 0 0 1-9.4 0z" fill="#9b9b9b"/><circle cx="19.3" cy="13.8" r="1.5" fill="#fff"/><path d="M1 15.6L14 12l.6 2.2L1.6 17.8z" fill="#9b9b9b"/><path d="M1.5 5.3l3.3-.8.7 2.4 2-.5-.6-2.4 3.3-.8 2 7.8-8.7 2.2z" fill="#9b9b9b"/></svg>
<svg class="a" style="left:495.5px;top:917.0px" width="11" height="19" viewBox="0 0 11 19"><rect x="0.4" y="0.3" width="10.2" height="18.6" rx="0.8" fill="#c9372c"/><path d="M2.2 4.5Q9.8 2.5 9.5 8L4.5 15.8M2.3 7.5v8.3h4.2" fill="none" stroke="#f3d0cc" stroke-width="0.9"/></svg>
<svg class="a" style="left:85px;top:942.0px" width="24" height="22" viewBox="0 0 24 22"><rect x="8.9" y="0.3" width="14.6" height="15.6" rx="1.6" fill="#787878"/><path d="M1.6 16.5V9.6L5.2 5.1Q5.9 4.1 7.1 4.1H9.5V16.5z" fill="#787878"/><rect x="8" y="12" width="15.5" height="4.5" fill="#787878"/><rect x="0" y="14.3" width="3" height="2.2" fill="#787878"/><path d="M3.1 10.2L6 6.3H8.3V10.2z" fill="#fff"/><circle cx="6" cy="16.2" r="3.2" fill="#787878"/><circle cx="17.7" cy="16.2" r="3.2" fill="#787878"/><circle cx="6" cy="16.2" r="1.5" fill="#fff"/><circle cx="17.7" cy="16.2" r="1.5" fill="#fff"/><rect x="11.5" y="6.8" width="9" height="2" fill="#c9c9c9"/></svg>
<div class="a t" style="left:186px;top:941.7px;line-height:20px;font-size:11.8px;letter-spacing:-0.15px;color:#323130;width:124px;overflow:hidden">7,5t EN-AX 2000</div>
<div class="a t" style="top:941.7px;line-height:20px;font-size:12px;color:#323130;right:2162px;text-align:right;">0</div>
<div class="a t" style="top:941.7px;line-height:20px;font-size:12px;color:#323130;right:2122px;text-align:right;">2100</div>
<div class="a t" style="top:941.7px;line-height:20px;font-size:12px;color:#323130;right:2085px;text-align:right;">20.10</div>
<svg class="a" style="left:419.6px;top:943.5px" width="18" height="18" viewBox="0 0 18 18"><path d="M9 1.3L17.2 17H0.8z" fill="none" stroke="#cc7f22" stroke-width="1.5" stroke-linejoin="round"/><path d="M9 6.3v6" stroke="#cc7f22" stroke-width="1.5"/><circle cx="9" cy="14.4" r="0.9" fill="#cc7f22"/></svg>
<svg class="a" style="left:453px;top:943.5px" width="24" height="19" viewBox="0 0 24 19"><path d="M13.6 0h9.4v13.8a4.7 4.7 0 0 1-9.4 0z" fill="#9b9b9b"/><circle cx="19.3" cy="13.8" r="1.5" fill="#fff"/><path d="M1 15.6L14 12l.6 2.2L1.6 17.8z" fill="#9b9b9b"/><path d="M1.5 5.3l3.3-.8.7 2.4 2-.5-.6-2.4 3.3-.8 2 7.8-8.7 2.2z" fill="#9b9b9b"/></svg>
<svg class="a" style="left:495.5px;top:943.0px" width="11" height="19" viewBox="0 0 11 19"><rect x="0.4" y="0.3" width="10.2" height="18.6" rx="0.8" fill="#c9372c"/><path d="M2.2 4.5Q9.8 2.5 9.5 8L4.5 15.8M2.3 7.5v8.3h4.2" fill="none" stroke="#f3d0cc" stroke-width="0.9"/></svg>
<svg class="a" style="left:85px;top:968.0px" width="24" height="22" viewBox="0 0 24 22"><rect x="8.9" y="0.3" width="14.6" height="15.6" rx="1.6" fill="#787878"/><path d="M1.6 16.5V9.6L5.2 5.1Q5.9 4.1 7.1 4.1H9.5V16.5z" fill="#787878"/><rect x="8" y="12" width="15.5" height="4.5" fill="#787878"/><rect x="0" y="14.3" width="3" height="2.2" fill="#787878"/><path d="M3.1 10.2L6 6.3H8.3V10.2z" fill="#fff"/><circle cx="6" cy="16.2" r="3.2" fill="#787878"/><circle cx="17.7" cy="16.2" r="3.2" fill="#787878"/><circle cx="6" cy="16.2" r="1.5" fill="#fff"/><circle cx="17.7" cy="16.2" r="1.5" fill="#fff"/><rect x="11.5" y="6.8" width="9" height="2" fill="#c9c9c9"/></svg>
<div class="a t" style="left:186px;top:967.7px;line-height:20px;font-size:11.8px;letter-spacing:-0.15px;color:#323130;width:124px;overflow:hidden">EN-AX 201 (18t)</div>
<div class="a t" style="top:967.7px;line-height:20px;font-size:12px;color:#323130;right:2162px;text-align:right;">0</div>
<div class="a t" style="top:967.7px;line-height:20px;font-size:12px;color:#323130;right:2122px;text-align:right;">5000</div>
<div class="a t" style="top:967.7px;line-height:20px;font-size:12px;color:#323130;right:2085px;text-align:right;">20.10</div>
<svg class="a" style="left:495.5px;top:969.0px" width="11" height="19" viewBox="0 0 11 19"><rect x="0.4" y="0.3" width="10.2" height="18.6" rx="0.8" fill="#c9372c"/><path d="M2.2 4.5Q9.8 2.5 9.5 8L4.5 15.8M2.3 7.5v8.3h4.2" fill="none" stroke="#f3d0cc" stroke-width="0.9"/></svg>
<svg class="a" style="left:85px;top:994.0px" width="24" height="22" viewBox="0 0 24 22"><rect x="8.9" y="0.3" width="14.6" height="15.6" rx="1.6" fill="#787878"/><path d="M1.6 16.5V9.6L5.2 5.1Q5.9 4.1 7.1 4.1H9.5V16.5z" fill="#787878"/><rect x="8" y="12" width="15.5" height="4.5" fill="#787878"/><rect x="0" y="14.3" width="3" height="2.2" fill="#787878"/><path d="M3.1 10.2L6 6.3H8.3V10.2z" fill="#fff"/><circle cx="6" cy="16.2" r="3.2" fill="#787878"/><circle cx="17.7" cy="16.2" r="3.2" fill="#787878"/><circle cx="6" cy="16.2" r="1.5" fill="#fff"/><circle cx="17.7" cy="16.2" r="1.5" fill="#fff"/><rect x="11.5" y="6.8" width="9" height="2" fill="#c9c9c9"/></svg>
<div class="a t" style="left:186px;top:993.7px;line-height:20px;font-size:11.8px;letter-spacing:-0.15px;color:#323130;width:124px;overflow:hidden">EN-AX 201 (18t)</div>
<div class="a t" style="top:993.7px;line-height:20px;font-size:12px;color:#323130;right:2162px;text-align:right;">0</div>
<div class="a t" style="top:993.7px;line-height:20px;font-size:12px;color:#323130;right:2122px;text-align:right;">5000</div>
<div class="a t" style="top:993.7px;line-height:20px;font-size:12px;color:#323130;right:2085px;text-align:right;">21.10</div>
<svg class="a" style="left:495.5px;top:995.0px" width="11" height="19" viewBox="0 0 11 19"><rect x="0.4" y="0.3" width="10.2" height="18.6" rx="0.8" fill="#c9372c"/><path d="M2.2 4.5Q9.8 2.5 9.5 8L4.5 15.8M2.3 7.5v8.3h4.2" fill="none" stroke="#f3d0cc" stroke-width="0.9"/></svg>
<svg class="a" style="left:85px;top:1020.0px" width="24" height="22" viewBox="0 0 24 22"><rect x="8.9" y="0.3" width="14.6" height="15.6" rx="1.6" fill="#787878"/><path d="M1.6 16.5V9.6L5.2 5.1Q5.9 4.1 7.1 4.1H9.5V16.5z" fill="#787878"/><rect x="8" y="12" width="15.5" height="4.5" fill="#787878"/><rect x="0" y="14.3" width="3" height="2.2" fill="#787878"/><path d="M3.1 10.2L6 6.3H8.3V10.2z" fill="#fff"/><circle cx="6" cy="16.2" r="3.2" fill="#787878"/><circle cx="17.7" cy="16.2" r="3.2" fill="#787878"/><circle cx="6" cy="16.2" r="1.5" fill="#fff"/><circle cx="17.7" cy="16.2" r="1.5" fill="#fff"/><rect x="11.5" y="6.8" width="9" height="2" fill="#c9c9c9"/></svg>
<div class="a t" style="left:186px;top:1019.7px;line-height:20px;font-size:11.8px;letter-spacing:-0.15px;color:#323130;width:124px;overflow:hidden">EN-AX 201 (18t)</div>
<div class="a t" style="top:1019.7px;line-height:20px;font-size:12px;color:#323130;right:2162px;text-align:right;">0</div>
<div class="a t" style="top:1019.7px;line-height:20px;font-size:12px;color:#323130;right:2122px;text-align:right;">5000</div>
<div class="a t" style="top:1019.7px;line-height:20px;font-size:12px;color:#323130;right:2085px;text-align:right;">22.10</div>
<svg class="a" style="left:495.5px;top:1021.0px" width="11" height="19" viewBox="0 0 11 19"><rect x="0.4" y="0.3" width="10.2" height="18.6" rx="0.8" fill="#c9372c"/><path d="M2.2 4.5Q9.8 2.5 9.5 8L4.5 15.8M2.3 7.5v8.3h4.2" fill="none" stroke="#f3d0cc" stroke-width="0.9"/></svg>
<svg class="a" style="left:85px;top:1046.0px" width="24" height="22" viewBox="0 0 24 22"><rect x="8.9" y="0.3" width="14.6" height="15.6" rx="1.6" fill="#787878"/><path d="M1.6 16.5V9.6L5.2 5.1Q5.9 4.1 7.1 4.1H9.5V16.5z" fill="#787878"/><rect x="8" y="12" width="15.5" height="4.5" fill="#787878"/><rect x="0" y="14.3" width="3" height="2.2" fill="#787878"/><path d="M3.1 10.2L6 6.3H8.3V10.2z" fill="#fff"/><circle cx="6" cy="16.2" r="3.2" fill="#787878"/><circle cx="17.7" cy="16.2" r="3.2" fill="#787878"/><circle cx="6" cy="16.2" r="1.5" fill="#fff"/><circle cx="17.7" cy="16.2" r="1.5" fill="#fff"/><rect x="11.5" y="6.8" width="9" height="2" fill="#c9c9c9"/></svg>
<div class="a t" style="left:186px;top:1045.7px;line-height:20px;font-size:11.8px;letter-spacing:-0.15px;color:#323130;width:124px;overflow:hidden">EN-AX 201 (18t)</div>
<div class="a t" style="top:1045.7px;line-height:20px;font-size:12px;color:#323130;right:2162px;text-align:right;">0</div>
<div class="a t" style="top:1045.7px;line-height:20px;font-size:12px;color:#323130;right:2122px;text-align:right;">5000</div>
<div class="a t" style="top:1045.7px;line-height:20px;font-size:12px;color:#323130;right:2085px;text-align:right;">23.10</div>
<svg class="a" style="left:495.5px;top:1047.0px" width="11" height="19" viewBox="0 0 11 19"><rect x="0.4" y="0.3" width="10.2" height="18.6" rx="0.8" fill="#c9372c"/><path d="M2.2 4.5Q9.8 2.5 9.5 8L4.5 15.8M2.3 7.5v8.3h4.2" fill="none" stroke="#f3d0cc" stroke-width="0.9"/></svg>
<svg class="a" style="left:85px;top:1072.0px" width="24" height="22" viewBox="0 0 24 22"><rect x="8.9" y="0.3" width="14.6" height="15.6" rx="1.6" fill="#787878"/><path d="M1.6 16.5V9.6L5.2 5.1Q5.9 4.1 7.1 4.1H9.5V16.5z" fill="#787878"/><rect x="8" y="12" width="15.5" height="4.5" fill="#787878"/><rect x="0" y="14.3" width="3" height="2.2" fill="#787878"/><path d="M3.1 10.2L6 6.3H8.3V10.2z" fill="#fff"/><circle cx="6" cy="16.2" r="3.2" fill="#787878"/><circle cx="17.7" cy="16.2" r="3.2" fill="#787878"/><circle cx="6" cy="16.2" r="1.5" fill="#fff"/><circle cx="17.7" cy="16.2" r="1.5" fill="#fff"/><rect x="11.5" y="6.8" width="9" height="2" fill="#c9c9c9"/></svg>
<div class="a t" style="left:186px;top:1071.7px;line-height:20px;font-size:11.8px;letter-spacing:-0.15px;color:#323130;width:124px;overflow:hidden">NV TIS 242-1-1</div>
<div class="a t" style="top:1071.7px;line-height:20px;font-size:12px;color:#323130;right:2162px;text-align:right;">0</div>
<div class="a t" style="top:1071.7px;line-height:20px;font-size:12px;color:#323130;right:2122px;text-align:right;">5500</div>
<div class="a t" style="top:1071.7px;line-height:20px;font-size:12px;color:#323130;right:2085px;text-align:right;">23.10</div>
<svg class="a" style="left:419.6px;top:1073.5px" width="18" height="18" viewBox="0 0 18 18"><path d="M9 1.3L17.2 17H0.8z" fill="none" stroke="#cc7f22" stroke-width="1.5" stroke-linejoin="round"/><path d="M9 6.3v6" stroke="#cc7f22" stroke-width="1.5"/><circle cx="9" cy="14.4" r="0.9" fill="#cc7f22"/></svg>
<svg class="a" style="left:453px;top:1073.5px" width="24" height="19" viewBox="0 0 24 19"><path d="M13.6 0h9.4v13.8a4.7 4.7 0 0 1-9.4 0z" fill="#9b9b9b"/><circle cx="19.3" cy="13.8" r="1.5" fill="#fff"/><path d="M1 15.6L14 12l.6 2.2L1.6 17.8z" fill="#9b9b9b"/><path d="M1.5 5.3l3.3-.8.7 2.4 2-.5-.6-2.4 3.3-.8 2 7.8-8.7 2.2z" fill="#9b9b9b"/></svg>
<svg class="a" style="left:495.5px;top:1073.0px" width="11" height="19" viewBox="0 0 11 19"><rect x="0.4" y="0.3" width="10.2" height="18.6" rx="0.8" fill="#c9372c"/><path d="M2.2 4.5Q9.8 2.5 9.5 8L4.5 15.8M2.3 7.5v8.3h4.2" fill="none" stroke="#f3d0cc" stroke-width="0.9"/></svg>
<svg class="a" style="left:85px;top:1098.0px" width="24" height="22" viewBox="0 0 24 22"><rect x="8.9" y="0.3" width="14.6" height="15.6" rx="1.6" fill="#787878"/><path d="M1.6 16.5V9.6L5.2 5.1Q5.9 4.1 7.1 4.1H9.5V16.5z" fill="#787878"/><rect x="8" y="12" width="15.5" height="4.5" fill="#787878"/><rect x="0" y="14.3" width="3" height="2.2" fill="#787878"/><path d="M3.1 10.2L6 6.3H8.3V10.2z" fill="#fff"/><circle cx="6" cy="16.2" r="3.2" fill="#787878"/><circle cx="17.7" cy="16.2" r="3.2" fill="#787878"/><circle cx="6" cy="16.2" r="1.5" fill="#fff"/><circle cx="17.7" cy="16.2" r="1.5" fill="#fff"/><rect x="11.5" y="6.8" width="9" height="2" fill="#c9c9c9"/></svg>
<div class="a t" style="left:186px;top:1097.7px;line-height:20px;font-size:11.8px;letter-spacing:-0.15px;color:#323130;width:124px;overflow:hidden">NV TIS 242-1-1</div>
<div class="a t" style="top:1097.7px;line-height:20px;font-size:12px;color:#323130;right:2162px;text-align:right;">0</div>
<div class="a t" style="top:1097.7px;line-height:20px;font-size:12px;color:#323130;right:2122px;text-align:right;">5500</div>
<div class="a t" style="top:1097.7px;line-height:20px;font-size:12px;color:#323130;right:2085px;text-align:right;">22.10</div>
<svg class="a" style="left:419.6px;top:1099.5px" width="18" height="18" viewBox="0 0 18 18"><path d="M9 1.3L17.2 17H0.8z" fill="none" stroke="#cc7f22" stroke-width="1.5" stroke-linejoin="round"/><path d="M9 6.3v6" stroke="#cc7f22" stroke-width="1.5"/><circle cx="9" cy="14.4" r="0.9" fill="#cc7f22"/></svg>
<svg class="a" style="left:453px;top:1099.5px" width="24" height="19" viewBox="0 0 24 19"><path d="M13.6 0h9.4v13.8a4.7 4.7 0 0 1-9.4 0z" fill="#9b9b9b"/><circle cx="19.3" cy="13.8" r="1.5" fill="#fff"/><path d="M1 15.6L14 12l.6 2.2L1.6 17.8z" fill="#9b9b9b"/><path d="M1.5 5.3l3.3-.8.7 2.4 2-.5-.6-2.4 3.3-.8 2 7.8-8.7 2.2z" fill="#9b9b9b"/></svg>
<svg class="a" style="left:495.5px;top:1099.0px" width="11" height="19" viewBox="0 0 11 19"><rect x="0.4" y="0.3" width="10.2" height="18.6" rx="0.8" fill="#c9372c"/><path d="M2.2 4.5Q9.8 2.5 9.5 8L4.5 15.8M2.3 7.5v8.3h4.2" fill="none" stroke="#f3d0cc" stroke-width="0.9"/></svg>
<svg class="a" style="left:85px;top:1124.0px" width="24" height="22" viewBox="0 0 24 22"><rect x="8.9" y="0.3" width="14.6" height="15.6" rx="1.6" fill="#787878"/><path d="M1.6 16.5V9.6L5.2 5.1Q5.9 4.1 7.1 4.1H9.5V16.5z" fill="#787878"/><rect x="8" y="12" width="15.5" height="4.5" fill="#787878"/><rect x="0" y="14.3" width="3" height="2.2" fill="#787878"/><path d="M3.1 10.2L6 6.3H8.3V10.2z" fill="#fff"/><circle cx="6" cy="16.2" r="3.2" fill="#787878"/><circle cx="17.7" cy="16.2" r="3.2" fill="#787878"/><circle cx="6" cy="16.2" r="1.5" fill="#fff"/><circle cx="17.7" cy="16.2" r="1.5" fill="#fff"/><rect x="11.5" y="6.8" width="9" height="2" fill="#c9c9c9"/></svg>
<div class="a t" style="left:186px;top:1123.7px;line-height:20px;font-size:11.8px;letter-spacing:-0.15px;color:#323130;width:124px;overflow:hidden">NV TIS 242-1-1</div>
<div class="a t" style="top:1123.7px;line-height:20px;font-size:12px;color:#323130;right:2162px;text-align:right;">0</div>
<div class="a t" style="top:1123.7px;line-height:20px;font-size:12px;color:#323130;right:2122px;text-align:right;">5500</div>
<div class="a t" style="top:1123.7px;line-height:20px;font-size:12px;color:#323130;right:2085px;text-align:right;">21.10</div>
<svg class="a" style="left:419.6px;top:1125.5px" width="18" height="18" viewBox="0 0 18 18"><path d="M9 1.3L17.2 17H0.8z" fill="none" stroke="#cc7f22" stroke-width="1.5" stroke-linejoin="round"/><path d="M9 6.3v6" stroke="#cc7f22" stroke-width="1.5"/><circle cx="9" cy="14.4" r="0.9" fill="#cc7f22"/></svg>
<svg class="a" style="left:453px;top:1125.5px" width="24" height="19" viewBox="0 0 24 19"><path d="M13.6 0h9.4v13.8a4.7 4.7 0 0 1-9.4 0z" fill="#9b9b9b"/><circle cx="19.3" cy="13.8" r="1.5" fill="#fff"/><path d="M1 15.6L14 12l.6 2.2L1.6 17.8z" fill="#9b9b9b"/><path d="M1.5 5.3l3.3-.8.7 2.4 2-.5-.6-2.4 3.3-.8 2 7.8-8.7 2.2z" fill="#9b9b9b"/></svg>
<svg class="a" style="left:495.5px;top:1125.0px" width="11" height="19" viewBox="0 0 11 19"><rect x="0.4" y="0.3" width="10.2" height="18.6" rx="0.8" fill="#c9372c"/><path d="M2.2 4.5Q9.8 2.5 9.5 8L4.5 15.8M2.3 7.5v8.3h4.2" fill="none" stroke="#f3d0cc" stroke-width="0.9"/></svg>
<svg class="a" style="left:85px;top:1150.0px" width="24" height="22" viewBox="0 0 24 22"><rect x="8.9" y="0.3" width="14.6" height="15.6" rx="1.6" fill="#787878"/><path d="M1.6 16.5V9.6L5.2 5.1Q5.9 4.1 7.1 4.1H9.5V16.5z" fill="#787878"/><rect x="8" y="12" width="15.5" height="4.5" fill="#787878"/><rect x="0" y="14.3" width="3" height="2.2" fill="#787878"/><path d="M3.1 10.2L6 6.3H8.3V10.2z" fill="#fff"/><circle cx="6" cy="16.2" r="3.2" fill="#787878"/><circle cx="17.7" cy="16.2" r="3.2" fill="#787878"/><circle cx="6" cy="16.2" r="1.5" fill="#fff"/><circle cx="17.7" cy="16.2" r="1.5" fill="#fff"/><rect x="11.5" y="6.8" width="9" height="2" fill="#c9c9c9"/></svg>
<div class="a t" style="left:186px;top:1149.7px;line-height:20px;font-size:11.8px;letter-spacing:-0.15px;color:#323130;width:124px;overflow:hidden">NV TIS 242-1-1</div>
<div class="a t" style="top:1149.7px;line-height:20px;font-size:12px;color:#323130;right:2162px;text-align:right;">0</div>
<div class="a t" style="top:1149.7px;line-height:20px;font-size:12px;color:#323130;right:2122px;text-align:right;">5500</div>
<div class="a t" style="top:1149.7px;line-height:20px;font-size:12px;color:#323130;right:2085px;text-align:right;">20.10</div>
<svg class="a" style="left:419.6px;top:1151.5px" width="18" height="18" viewBox="0 0 18 18"><path d="M9 1.3L17.2 17H0.8z" fill="none" stroke="#cc7f22" stroke-width="1.5" stroke-linejoin="round"/><path d="M9 6.3v6" stroke="#cc7f22" stroke-width="1.5"/><circle cx="9" cy="14.4" r="0.9" fill="#cc7f22"/></svg>
<svg class="a" style="left:453px;top:1151.5px" width="24" height="19" viewBox="0 0 24 19"><path d="M13.6 0h9.4v13.8a4.7 4.7 0 0 1-9.4 0z" fill="#9b9b9b"/><circle cx="19.3" cy="13.8" r="1.5" fill="#fff"/><path d="M1 15.6L14 12l.6 2.2L1.6 17.8z" fill="#9b9b9b"/><path d="M1.5 5.3l3.3-.8.7 2.4 2-.5-.6-2.4 3.3-.8 2 7.8-8.7 2.2z" fill="#9b9b9b"/></svg>
<svg class="a" style="left:495.5px;top:1151.0px" width="11" height="19" viewBox="0 0 11 19"><rect x="0.4" y="0.3" width="10.2" height="18.6" rx="0.8" fill="#c9372c"/><path d="M2.2 4.5Q9.8 2.5 9.5 8L4.5 15.8M2.3 7.5v8.3h4.2" fill="none" stroke="#f3d0cc" stroke-width="0.9"/></svg>
<svg class="a" style="left:85px;top:1176.0px" width="24" height="22" viewBox="0 0 24 22"><rect x="8.9" y="0.3" width="14.6" height="15.6" rx="1.6" fill="#787878"/><path d="M1.6 16.5V9.6L5.2 5.1Q5.9 4.1 7.1 4.1H9.5V16.5z" fill="#787878"/><rect x="8" y="12" width="15.5" height="4.5" fill="#787878"/><rect x="0" y="14.3" width="3" height="2.2" fill="#787878"/><path d="M3.1 10.2L6 6.3H8.3V10.2z" fill="#fff"/><circle cx="6" cy="16.2" r="3.2" fill="#787878"/><circle cx="17.7" cy="16.2" r="3.2" fill="#787878"/><circle cx="6" cy="16.2" r="1.5" fill="#fff"/><circle cx="17.7" cy="16.2" r="1.5" fill="#fff"/><rect x="11.5" y="6.8" width="9" height="2" fill="#c9c9c9"/></svg>
<div class="a t" style="left:186px;top:1175.7px;line-height:20px;font-size:11.8px;letter-spacing:-0.15px;color:#323130;width:124px;overflow:hidden">Roeken Transport 12to.-7,5t</div>
<div class="a t" style="top:1175.7px;line-height:20px;font-size:12px;color:#323130;right:2162px;text-align:right;">0</div>
<div class="a t" style="top:1175.7px;line-height:20px;font-size:12px;color:#323130;right:2122px;text-align:right;">5000</div>
<div class="a t" style="top:1175.7px;line-height:20px;font-size:12px;color:#323130;right:2085px;text-align:right;">20.10</div>
<svg class="a" style="left:419.6px;top:1177.5px" width="18" height="18" viewBox="0 0 18 18"><path d="M9 1.3L17.2 17H0.8z" fill="none" stroke="#cc7f22" stroke-width="1.5" stroke-linejoin="round"/><path d="M9 6.3v6" stroke="#cc7f22" stroke-width="1.5"/><circle cx="9" cy="14.4" r="0.9" fill="#cc7f22"/></svg>
<svg class="a" style="left:495.5px;top:1177.0px" width="11" height="19" viewBox="0 0 11 19"><rect x="0.4" y="0.3" width="10.2" height="18.6" rx="0.8" fill="#c9372c"/><path d="M2.2 4.5Q9.8 2.5 9.5 8L4.5 15.8M2.3 7.5v8.3h4.2" fill="none" stroke="#f3d0cc" stroke-width="0.9"/></svg>
<svg class="a" style="left:85px;top:1202.0px" width="24" height="22" viewBox="0 0 24 22"><rect x="8.9" y="0.3" width="14.6" height="15.6" rx="1.6" fill="#787878"/><path d="M1.6 16.5V9.6L5.2 5.1Q5.9 4.1 7.1 4.1H9.5V16.5z" fill="#787878"/><rect x="8" y="12" width="15.5" height="4.5" fill="#787878"/><rect x="0" y="14.3" width="3" height="2.2" fill="#787878"/><path d="M3.1 10.2L6 6.3H8.3V10.2z" fill="#fff"/><circle cx="6" cy="16.2" r="3.2" fill="#787878"/><circle cx="17.7" cy="16.2" r="3.2" fill="#787878"/><circle cx="6" cy="16.2" r="1.5" fill="#fff"/><circle cx="17.7" cy="16.2" r="1.5" fill="#fff"/><rect x="11.5" y="6.8" width="9" height="2" fill="#c9c9c9"/></svg>
<div class="a t" style="left:186px;top:1201.7px;line-height:20px;font-size:11.8px;letter-spacing:-0.15px;color:#323130;width:124px;overflow:hidden">Roeken Transport 12to.-7,5t</div>
<div class="a t" style="top:1201.7px;line-height:20px;font-size:12px;color:#323130;right:2162px;text-align:right;">0</div>
<div class="a t" style="top:1201.7px;line-height:20px;font-size:12px;color:#323130;right:2122px;text-align:right;">5000</div>
<div class="a t" style="top:1201.7px;line-height:20px;font-size:12px;color:#323130;right:2085px;text-align:right;">21.10</div>
<svg class="a" style="left:419.6px;top:1203.5px" width="18" height="18" viewBox="0 0 18 18"><path d="M9 1.3L17.2 17H0.8z" fill="none" stroke="#cc7f22" stroke-width="1.5" stroke-linejoin="round"/><path d="M9 6.3v6" stroke="#cc7f22" stroke-width="1.5"/><circle cx="9" cy="14.4" r="0.9" fill="#cc7f22"/></svg>
<svg class="a" style="left:495.5px;top:1203.0px" width="11" height="19" viewBox="0 0 11 19"><rect x="0.4" y="0.3" width="10.2" height="18.6" rx="0.8" fill="#c9372c"/><path d="M2.2 4.5Q9.8 2.5 9.5 8L4.5 15.8M2.3 7.5v8.3h4.2" fill="none" stroke="#f3d0cc" stroke-width="0.9"/></svg>
<svg class="a" style="left:85px;top:1228.0px" width="24" height="22" viewBox="0 0 24 22"><rect x="8.9" y="0.3" width="14.6" height="15.6" rx="1.6" fill="#787878"/><path d="M1.6 16.5V9.6L5.2 5.1Q5.9 4.1 7.1 4.1H9.5V16.5z" fill="#787878"/><rect x="8" y="12" width="15.5" height="4.5" fill="#787878"/><rect x="0" y="14.3" width="3" height="2.2" fill="#787878"/><path d="M3.1 10.2L6 6.3H8.3V10.2z" fill="#fff"/><circle cx="6" cy="16.2" r="3.2" fill="#787878"/><circle cx="17.7" cy="16.2" r="3.2" fill="#787878"/><circle cx="6" cy="16.2" r="1.5" fill="#fff"/><circle cx="17.7" cy="16.2" r="1.5" fill="#fff"/><rect x="11.5" y="6.8" width="9" height="2" fill="#c9c9c9"/></svg>
<div class="a t" style="left:186px;top:1227.7px;line-height:20px;font-size:11.8px;letter-spacing:-0.15px;color:#323130;width:124px;overflow:hidden">Roeken Transport 12to.-7,5t</div>
<div class="a t" style="top:1227.7px;line-height:20px;font-size:12px;color:#323130;right:2162px;text-align:right;">0</div>
<div class="a t" style="top:1227.7px;line-height:20px;font-size:12px;color:#323130;right:2122px;text-align:right;">5000</div>
<div class="a t" style="top:1227.7px;line-height:20px;font-size:12px;color:#323130;right:2085px;text-align:right;">22.10</div>
<svg class="a" style="left:419.6px;top:1229.5px" width="18" height="18" viewBox="0 0 18 18"><path d="M9 1.3L17.2 17H0.8z" fill="none" stroke="#cc7f22" stroke-width="1.5" stroke-linejoin="round"/><path d="M9 6.3v6" stroke="#cc7f22" stroke-width="1.5"/><circle cx="9" cy="14.4" r="0.9" fill="#cc7f22"/></svg>
<svg class="a" style="left:495.5px;top:1229.0px" width="11" height="19" viewBox="0 0 11 19"><rect x="0.4" y="0.3" width="10.2" height="18.6" rx="0.8" fill="#c9372c"/><path d="M2.2 4.5Q9.8 2.5 9.5 8L4.5 15.8M2.3 7.5v8.3h4.2" fill="none" stroke="#f3d0cc" stroke-width="0.9"/></svg>
<svg class="a" style="left:85px;top:1254.0px" width="24" height="22" viewBox="0 0 24 22"><rect x="8.9" y="0.3" width="14.6" height="15.6" rx="1.6" fill="#787878"/><path d="M1.6 16.5V9.6L5.2 5.1Q5.9 4.1 7.1 4.1H9.5V16.5z" fill="#787878"/><rect x="8" y="12" width="15.5" height="4.5" fill="#787878"/><rect x="0" y="14.3" width="3" height="2.2" fill="#787878"/><path d="M3.1 10.2L6 6.3H8.3V10.2z" fill="#fff"/><circle cx="6" cy="16.2" r="3.2" fill="#787878"/><circle cx="17.7" cy="16.2" r="3.2" fill="#787878"/><circle cx="6" cy="16.2" r="1.5" fill="#fff"/><circle cx="17.7" cy="16.2" r="1.5" fill="#fff"/><rect x="11.5" y="6.8" width="9" height="2" fill="#c9c9c9"/></svg>
<div class="a t" style="left:186px;top:1253.7px;line-height:20px;font-size:11.8px;letter-spacing:-0.15px;color:#323130;width:124px;overflow:hidden">Roeken Transport 12to.-7,5t</div>
<div class="a t" style="top:1253.7px;line-height:20px;font-size:12px;color:#323130;right:2162px;text-align:right;">0</div>
<div class="a t" style="top:1253.7px;line-height:20px;font-size:12px;color:#323130;right:2122px;text-align:right;">5000</div>
<div class="a t" style="top:1253.7px;line-height:20px;font-size:12px;color:#323130;right:2085px;text-align:right;">23.10</div>
<svg class="a" style="left:419.6px;top:1255.5px" width="18" height="18" viewBox="0 0 18 18"><path d="M9 1.3L17.2 17H0.8z" fill="none" stroke="#cc7f22" stroke-width="1.5" stroke-linejoin="round"/><path d="M9 6.3v6" stroke="#cc7f22" stroke-width="1.5"/><circle cx="9" cy="14.4" r="0.9" fill="#cc7f22"/></svg>
<svg class="a" style="left:495.5px;top:1255.0px" width="11" height="19" viewBox="0 0 11 19"><rect x="0.4" y="0.3" width="10.2" height="18.6" rx="0.8" fill="#c9372c"/><path d="M2.2 4.5Q9.8 2.5 9.5 8L4.5 15.8M2.3 7.5v8.3h4.2" fill="none" stroke="#f3d0cc" stroke-width="0.9"/></svg>
<div class="a" style="left:180px;top:831px;width:1px;height:437px;background:#e1dfdd;"></div>
<div class="a" style="left:310px;top:831px;width:1px;height:437px;background:#e1dfdd;"></div>
<div class="a" style="left:313px;top:831px;width:1px;height:437px;background:#e1dfdd;"></div>
<div class="a" style="left:339px;top:831px;width:1px;height:437px;background:#e1dfdd;"></div>
<div class="a" style="left:378px;top:831px;width:1px;height:437px;background:#e1dfdd;"></div>
<div class="a" style="left:414px;top:831px;width:1px;height:437px;background:#e1dfdd;"></div>
<div class="a" style="left:450px;top:831px;width:1px;height:437px;background:#e1dfdd;"></div>
<div class="a" style="left:486px;top:831px;width:1px;height:437px;background:#e1dfdd;"></div>
<div class="a" style="left:523px;top:870px;width:5px;height:158px;background:#c8c8c8;border-radius:3px;"></div>
<div class="a" style="left:541px;top:164px;width:1568px;height:533px;background:#ffffff;"></div>
<div class="a t" style="top:171.5px;line-height:20px;font-size:12px;font-weight:700;color:#201f1e;left:551px;letter-spacing:-0.35px;">UNDISPONIERTE AUFTRÄGE - NAHVERKEHR</div>
<svg class="a" style="left:556.0px;top:207.0px" width="16" height="16" viewBox="0 0 16 16"><path d="M2.5 1.5h11v13h-11z" fill="none" stroke="#3f62ef" stroke-width="1.2" /><path d="M4.5 3.5h7v4h-7zM4.5 9h7v4h-7z" fill="none" stroke="#3f62ef" stroke-width="1.2" /></svg>
<svg class="a" style="left:583.0px;top:207.0px" width="16" height="16" viewBox="0 0 16 16"><path d="M11 3h3v3h-3zM11 10h3v3h-3zM8 8l3-3.5M8 8l3 3.5" fill="none" stroke="#3f62ef" stroke-width="1.2" /><path d="M1 5.5h5M1 8h7M1 10.5h5" fill="none" stroke="#3f62ef" stroke-width="1" stroke-dasharray="1 1.2"/></svg>
<svg class="a" style="left:610.0px;top:207.0px" width="16" height="16" viewBox="0 0 16 16"><path d="M2 3h8M2 3v11h11V7" fill="none" stroke="#3f62ef" stroke-width="1.2" /><path d="M12.7 1.8l1.5 1.5-7.5 7.5-2 .5.5-2z" fill="none" stroke="#3f62ef" stroke-width="1.2" /></svg>
<svg class="a" style="left:637.0px;top:207.0px" width="16" height="16" viewBox="0 0 16 16"><path d="M1.5 3h13v10h-6M1.5 3v10h4M1.5 5.5h13M4.5 1.5v2.5M11.5 1.5v2.5" fill="none" stroke="#3f62ef" stroke-width="1.2" /><path d="M4 8h1M7 8h1M10 8h1M4 10.5h1M7 10.5h1" fill="none" stroke="#3f62ef" stroke-width="1" /><path d="M8 14.5l.4-2 5-5 1.6 1.6-5 5z" fill="none" stroke="#3f62ef" stroke-width="1.2" /></svg>
<svg class="a" style="left:664.0px;top:207.0px" width="16" height="16" viewBox="0 0 16 16"><path d="M3.5 7h9v7.5h-9zM5.5 7V4.5a2.5 2.5 0 0 1 5 0V7" fill="none" stroke="#3f62ef" stroke-width="1.2" /></svg>
<svg class="a" style="left:691.0px;top:207.0px" width="16" height="16" viewBox="0 0 16 16"><path d="M3 3h2M11 3h2v8M3 3v11h6" fill="none" stroke="#3f62ef" stroke-width="1.2" /><path d="M6 1.5h4v3H6z" fill="none" stroke="#3f62ef" stroke-width="1.2" /><path d="M9.5 12.5h5M12.5 10.5l2 2-2 2" fill="none" stroke="#3f62ef" stroke-width="1.2" /></svg>
<svg class="a" style="left:718.0px;top:207.0px" width="16" height="16" viewBox="0 0 16 16"><path d="M1.5 3h3v3h-3zM1.5 10h3v3h-3z" fill="none" stroke="#3f62ef" stroke-width="1.2" /><path d="M6.5 4h8M6.5 5.5h5M6.5 11h8M6.5 12.5h5" fill="none" stroke="#3f62ef" stroke-width="1.1" /></svg>
<div class="a t" style="top:205.0px;line-height:20px;font-size:11px;color:#3f62ef;left:460.5px;width:600px;text-align:center;">A</div>
<div class="a t" style="top:205.0px;line-height:20px;font-size:11px;color:#3f62ef;left:504px;width:600px;text-align:center;">Z</div>
<div class="a t" style="top:205.0px;line-height:20px;font-size:11px;color:#3f62ef;left:547.5px;width:600px;text-align:center;">R</div>
<svg class="a" style="left:875.5px;top:207.0px" width="16" height="16" viewBox="0 0 16 16"><path d="M2 2.5v11M4.5 2.5v11M7 2.5v11M9.5 3l3.5 10.5" fill="none" stroke="#3f62ef" stroke-width="1.2" /></svg>
<svg class="a" style="left:902.6px;top:207.0px" width="16" height="16" viewBox="0 0 16 16"><path d="M1.5 5.5h12.5M11 2.5l3 3-3 3M14.5 10.5H2M5 7.5l-3 3 3 3" fill="none" stroke="#3f62ef" stroke-width="1.2" /></svg>
<svg class="a" style="left:930.0px;top:207.0px" width="16" height="16" viewBox="0 0 16 16"><path d="M2.5 1.5h9v5M2.5 1.5v13h5M4.5 4.5h5M4.5 7h5M4.5 9.5h3" fill="none" stroke="#3f62ef" stroke-width="1.2" /><path d="M8.5 14.5l.4-2 5-5 1.6 1.6-5 5z" fill="none" stroke="#3f62ef" stroke-width="1.2" /></svg>
<svg class="a" style="left:956.7px;top:207.0px" width="16" height="16" viewBox="0 0 16 16"><path d="M2.5 1.5h7l3 3v3M2.5 1.5v13h4" fill="none" stroke="#3f62ef" stroke-width="1.2" /><path d="M4.5 8h3v6h-3zM8.5 8h3v3M7.5 12h7M12.5 10l2 2-2 2" fill="none" stroke="#3f62ef" stroke-width="1.2" /></svg>
<svg class="a" style="left:983.0px;top:207.0px" width="16" height="16" viewBox="0 0 16 16"><path d="M8 1.8a1.6 1.6 0 1 0 .01 0M8 5v3M4.5 8h7l2 6.5h-11zM5.5 11l2.5-3 2.5 3" fill="none" stroke="#3f62ef" stroke-width="1.2" /></svg>
<svg class="a" style="left:1010.0px;top:207.0px" width="16" height="16" viewBox="0 0 16 16"><path d="M1.5 4.5h7M1.5 4.5v9h12V8.5M9.5 1.5h5v5M14.5 1.5l-6 6" fill="none" stroke="#3f62ef" stroke-width="1.2" /></svg>
<div class="a t" style="top:205.0px;line-height:20px;font-size:10.6px;color:#3f62ef;left:1042px;">Disponieren</div>
<svg class="a" style="left:1113.0px;top:207.0px" width="16" height="16" viewBox="0 0 16 16"><path d="M1 8h6M5 6l2 2-2 2" fill="none" stroke="#3f62ef" stroke-width="1.1" /><path d="M8.5 3.5h6M8.5 6.5h6M8.5 9.5h6M8.5 12.5h6" fill="none" stroke="#3f62ef" stroke-width="1.1" /></svg>
<div class="a" style="left:551px;top:239px;width:1550px;height:307px;background:#fff;box-sizing:border-box;border:1px solid #c8c6c4;"></div>
<div class="a" style="left:552px;top:271px;width:1548px;height:1px;background:#d1d0ce;"></div>
<svg class="a" style="left:562px;top:246px" width="20" height="20" viewBox="0 0 20 20"><circle cx="10" cy="10" r="8.8" fill="none" stroke="#5f5e5c" stroke-width="1.1"/></svg>
<div class="a t" style="top:246.5px;line-height:20px;font-size:12.5px;color:#201f1e;left:596px;-webkit-text-stroke:0.45px #201f1e;">Ei...</div>
<div class="a t" style="top:246.5px;line-height:20px;font-size:12.5px;color:#201f1e;left:629px;-webkit-text-stroke:0.45px #201f1e;">A...</div>
<div class="a t" style="top:246.5px;line-height:20px;font-size:12.5px;color:#201f1e;left:662px;-webkit-text-stroke:0.45px #201f1e;">Vorgang</div>
<div class="a t" style="top:246.5px;line-height:20px;font-size:12.5px;color:#201f1e;left:823.5px;-webkit-text-stroke:0.45px #201f1e;">Ladedatum</div>
<div class="a t" style="top:246.5px;line-height:20px;font-size:12.5px;color:#201f1e;left:984.4px;-webkit-text-stroke:0.45px #201f1e;">Ladedatum Auftrag</div>
<div class="a t" style="top:246.5px;line-height:20px;font-size:12.5px;color:#201f1e;left:1246px;-webkit-text-stroke:0.45px #201f1e;">Von Straße</div>
<div class="a t" style="top:246.5px;line-height:20px;font-size:12.5px;color:#201f1e;left:1403px;-webkit-text-stroke:0.45px #201f1e;">Von Land</div>
<div class="a t" style="top:246.5px;line-height:20px;font-size:12.5px;color:#201f1e;left:1504px;-webkit-text-stroke:0.45px #201f1e;">Von PLZ</div>
<div class="a t" style="top:246.5px;line-height:20px;font-size:12.5px;color:#201f1e;left:1607px;-webkit-text-stroke:0.45px #201f1e;">Von Ort</div>
<div class="a t" style="top:246.5px;line-height:20px;font-size:12.5px;color:#201f1e;left:1727.4px;-webkit-text-stroke:0.45px #201f1e;">Auftragsnumm...</div>
<div class="a t" style="top:246.5px;line-height:20px;font-size:12.5px;color:#201f1e;left:1828px;-webkit-text-stroke:0.45px #201f1e;">EL</div>
<div class="a t" style="top:246.5px;line-height:20px;font-size:12.5px;color:#201f1e;left:1861px;-webkit-text-stroke:0.45px #201f1e;">Entladedatum</div>
<div class="a t" style="top:246.5px;line-height:20px;font-size:12.5px;color:#201f1e;left:2022px;-webkit-text-stroke:0.45px #201f1e;">G...</div>
<div class="a t" style="top:246.5px;line-height:20px;font-size:12.5px;color:#201f1e;right:1261px;text-align:right;-webkit-text-stroke:0.45px #201f1e;">Gewicht</div>
<div class="a t" style="left:2055px;top:246.5px;width:28px;overflow:hidden;line-height:20px;font-size:12.5px;color:#201f1e;-webkit-text-stroke:0.45px #201f1e;">Von l</div>
<svg class="a" style="left:2088px;top:248px" width="4" height="16" viewBox="0 0 4 16"><circle cx="2" cy="2.5" r="1.1" fill="#201f1e"/><circle cx="2" cy="8" r="1.1" fill="#201f1e"/><circle cx="2" cy="13.5" r="1.1" fill="#201f1e"/></svg>
<div class="a" style="left:819px;top:272px;width:160px;height:32px;background:#50c622;"></div>
<div class="a t" style="top:279.0px;line-height:20px;font-size:13.5px;color:#323130;left:663px;">Abholung</div>
<div class="a t" style="top:279.0px;line-height:20px;font-size:13.5px;color:#323130;left:824px;">23.10.2025</div>
<div class="a t" style="top:279.0px;line-height:20px;font-size:13.5px;color:#323130;left:985px;">23.10.2025</div>
<div class="a t" style="top:279.0px;line-height:20px;font-size:13.5px;color:#323130;right:1262px;text-align:right;">222,00</div>
<div class="a t" style="top:279.0px;line-height:20px;font-size:13.5px;color:#323130;left:1247px;">Feldstr. 29</div>
<div class="a t" style="top:279.0px;line-height:20px;font-size:13.5px;color:#323130;left:1404px;">DEU</div>
<div class="a t" style="top:279.0px;line-height:20px;font-size:13.5px;color:#323130;left:1505px;">40699</div>
<div class="a t" style="top:279.0px;line-height:20px;font-size:13.5px;color:#323130;left:1608px;">Erkrath</div>
<div class="a t" style="top:279.0px;line-height:20px;font-size:13.5px;color:#323130;left:1728px;">100038768</div>
<div class="a t" style="left:2056px;top:279px;width:44px;overflow:hidden;line-height:20px;font-size:13.5px;color:#323130;font-weight:400">Brumby</div>
<div class="a" style="left:552px;top:305px;width:1548px;height:33px;background:#d8e3fa;"></div>
<div class="a" style="left:552px;top:305px;width:4px;height:33px;background:#2f5ce0;"></div>
<svg class="a" style="left:562px;top:311.5px" width="20" height="20" viewBox="0 0 20 20"><circle cx="10" cy="10" r="9.2" fill="#2f5ce0"/><path d="M5.2 10.3l3.2 3.1 6.3-6.3" fill="none" stroke="#fff" stroke-width="1.3"/></svg>
<div class="a t" style="top:312.0px;line-height:20px;font-size:13.5px;color:#323130;left:663px;">Zustellung</div>
<div class="a t" style="top:312.0px;line-height:20px;font-size:13.5px;color:#323130;left:824px;">16.10.2025</div>
<div class="a t" style="top:312.0px;line-height:20px;font-size:13.5px;color:#323130;left:985px;">15.10.2025</div>
<div class="a t" style="top:312.0px;line-height:20px;font-size:13.5px;color:#323130;right:1262px;text-align:right;">2.000,00</div>
<div class="a t" style="top:312.0px;line-height:20px;font-size:13.5px;color:#323130;left:1247px;">INDUSTRIE-STR. 4</div>
<div class="a t" style="top:312.0px;line-height:20px;font-size:13.5px;color:#3a5bd9;left:1404px;">DEU</div>
<div class="a t" style="top:312.0px;line-height:20px;font-size:13.5px;color:#3a5bd9;left:1505px;">91083</div>
<div class="a t" style="top:312.0px;line-height:20px;font-size:13.5px;color:#323130;left:1608px;">Baiersdorf</div>
<div class="a t" style="top:312.0px;line-height:20px;font-size:13.5px;color:#323130;left:1728px;">100038758</div>
<div class="a" style="left:1824px;top:305px;width:31px;height:33px;background:#ffffff;"></div>
<svg class="a" style="left:1823px;top:306px" width="32" height="31" viewBox="0 0 32 31"><path d="M3.5 17.5l8 9 17-22" fill="none" stroke="#86b06f" stroke-width="5" stroke-linecap="round" stroke-linejoin="round"/></svg>
<div class="a t" style="left:2056px;top:312px;width:44px;overflow:hidden;line-height:20px;font-size:13.5px;color:#323130;font-weight:400">ISOPAR</div>
<div class="a" style="left:819px;top:338px;width:160px;height:32px;background:#c0302f;"></div>
<div class="a t" style="top:345.0px;line-height:20px;font-size:13.5px;color:#323130;left:663px;">Zustellung</div>
<div class="a t" style="top:345.0px;line-height:20px;font-size:13.5px;color:#3a1a14;left:824px;">16.10.2025</div>
<div class="a t" style="top:345.0px;line-height:20px;font-size:13.5px;color:#323130;left:985px;">15.10.2025</div>
<div class="a t" style="top:345.0px;line-height:20px;font-size:13.5px;color:#323130;right:1262px;text-align:right;">10,50</div>
<div class="a t" style="top:345.0px;line-height:20px;font-size:13.5px;color:#323130;left:1247px;">INDUSTRIE-STR. 4</div>
<div class="a t" style="top:345.0px;line-height:20px;font-size:13.5px;color:#323130;left:1404px;">DEU</div>
<div class="a t" style="top:345.0px;line-height:20px;font-size:13.5px;color:#323130;left:1505px;">91083</div>
<div class="a t" style="top:345.0px;line-height:20px;font-size:13.5px;color:#323130;left:1608px;">Baiersdorf</div>
<div class="a t" style="top:345.0px;line-height:20px;font-size:13.5px;color:#323130;left:1728px;">100038759</div>
<svg class="a" style="left:1823px;top:339px" width="32" height="31" viewBox="0 0 32 31"><path d="M3.5 17.5l8 9 17-22" fill="none" stroke="#86b06f" stroke-width="5" stroke-linecap="round" stroke-linejoin="round"/></svg>
<div class="a t" style="left:2056px;top:345px;width:44px;overflow:hidden;line-height:20px;font-size:13.5px;color:#323130;font-weight:400">ISOPAR</div>
<div class="a" style="left:819px;top:371px;width:160px;height:32px;background:#c0302f;"></div>
<div class="a t" style="top:378.0px;line-height:20px;font-size:13.5px;color:#323130;left:663px;">Zustellung</div>
<div class="a t" style="top:378.0px;line-height:20px;font-size:13.5px;color:#3a1a14;left:824px;">20.10.2025</div>
<div class="a t" style="top:378.0px;line-height:20px;font-size:13.5px;color:#323130;left:985px;">20.10.2025</div>
<div class="a t" style="top:378.0px;line-height:20px;font-size:13.5px;color:#323130;right:1262px;text-align:right;">850,00</div>
<div class="a t" style="top:378.0px;line-height:20px;font-size:13.5px;color:#323130;left:1247px;">Wasserstr. 5</div>
<div class="a t" style="top:378.0px;line-height:20px;font-size:13.5px;color:#323130;left:1404px;">DEU</div>
<div class="a t" style="top:378.0px;line-height:20px;font-size:13.5px;color:#323130;left:1505px;">20146</div>
<div class="a t" style="top:378.0px;line-height:20px;font-size:13.5px;color:#323130;left:1608px;">Hamburg</div>
<div class="a t" style="top:378.0px;line-height:20px;font-size:13.5px;color:#323130;left:1728px;">100038762</div>
<div class="a t" style="left:2056px;top:378px;width:44px;overflow:hidden;line-height:20px;font-size:13.5px;color:#323130;font-weight:400">Hamburg</div>
<div class="a" style="left:819px;top:404px;width:160px;height:32px;background:#c0302f;"></div>
<div class="a t" style="top:411.0px;line-height:20px;font-size:13.5px;color:#323130;left:663px;">Zustellung</div>
<div class="a t" style="top:411.0px;line-height:20px;font-size:13.5px;color:#3a1a14;left:824px;">21.10.2025</div>
<div class="a t" style="top:411.0px;line-height:20px;font-size:13.5px;color:#323130;left:985px;">20.10.2025</div>
<div class="a t" style="top:411.0px;line-height:20px;font-size:13.5px;color:#323130;right:1262px;text-align:right;">1.500,00</div>
<div class="a t" style="top:411.0px;line-height:20px;font-size:13.5px;color:#323130;left:1247px;">Gurkenallee</div>
<div class="a t" style="top:411.0px;line-height:20px;font-size:13.5px;color:#323130;left:1404px;">DEU</div>
<div class="a t" style="top:411.0px;line-height:20px;font-size:13.5px;color:#323130;left:1505px;">20457</div>
<div class="a t" style="top:411.0px;line-height:20px;font-size:13.5px;color:#323130;left:1608px;">Hamburg (Hafe...</div>
<div class="a t" style="top:411.0px;line-height:20px;font-size:13.5px;color:#323130;left:1728px;">100038764</div>
<div class="a t" style="left:2056px;top:411px;width:44px;overflow:hidden;line-height:20px;font-size:13.5px;color:#323130;font-weight:400">HH Speicher</div>
<div class="a" style="left:819px;top:437px;width:160px;height:32px;background:#c0302f;"></div>
<div class="a t" style="top:444.0px;line-height:20px;font-size:13.5px;color:#323130;left:663px;">Abholung</div>
<div class="a t" style="top:444.0px;line-height:20px;font-size:13.5px;color:#3a1a14;left:824px;">22.10.2025</div>
<div class="a t" style="top:444.0px;line-height:20px;font-size:13.5px;color:#323130;left:985px;">22.10.2025</div>
<div class="a t" style="top:444.0px;line-height:20px;font-size:13.5px;color:#323130;right:1262px;text-align:right;">2.000,00</div>
<div class="a t" style="top:444.0px;line-height:20px;font-size:13.5px;color:#323130;left:1247px;">SCHUCKERTSTR. 5</div>
<div class="a t" style="top:444.0px;line-height:20px;font-size:13.5px;color:#323130;left:1404px;">DEU</div>
<div class="a t" style="top:444.0px;line-height:20px;font-size:13.5px;color:#323130;left:1505px;">48153</div>
<div class="a t" style="top:444.0px;line-height:20px;font-size:13.5px;color:#323130;left:1608px;">Münster</div>
<div class="a t" style="top:444.0px;line-height:20px;font-size:13.5px;color:#323130;left:1728px;">100038765</div>
<div class="a t" style="left:2056px;top:444px;width:44px;overflow:hidden;line-height:20px;font-size:13.5px;color:#323130;font-weight:400">ARMACELL</div>
<div class="a" style="left:819px;top:470px;width:160px;height:32px;background:#c0302f;"></div>
<div class="a t" style="top:477.0px;line-height:20px;font-size:13.5px;color:#323130;left:663px;">Abholung</div>
<div class="a t" style="top:477.0px;line-height:20px;font-size:13.5px;color:#3a1a14;left:824px;">22.10.2025</div>
<div class="a t" style="top:477.0px;line-height:20px;font-size:13.5px;color:#323130;left:985px;">22.10.2025</div>
<div class="a t" style="top:477.0px;line-height:20px;font-size:13.5px;color:#323130;right:1262px;text-align:right;">150,00</div>
<div class="a t" style="top:477.0px;line-height:20px;font-size:13.5px;color:#323130;left:1247px;">Schwelmerstraße 55</div>
<div class="a t" style="top:477.0px;line-height:20px;font-size:13.5px;color:#323130;left:1404px;">DEU</div>
<div class="a t" style="top:477.0px;line-height:20px;font-size:13.5px;color:#323130;left:1505px;">42275</div>
<div class="a t" style="top:477.0px;line-height:20px;font-size:13.5px;color:#323130;left:1608px;">Wuppertal</div>
<div class="a t" style="top:477.0px;line-height:20px;font-size:13.5px;color:#323130;left:1728px;">100038766</div>
<div class="a t" style="left:2056px;top:477px;width:44px;overflow:hidden;line-height:20px;font-size:13.5px;color:#323130;font-weight:400">Maier H</div>
<div class="a" style="left:2100px;top:272px;width:1px;height:231px;background:#e6e6e6;"></div>
<div class="a" style="left:556px;top:535px;width:530px;height:7px;background:#c2c2c2;border-radius:4px;"></div>
<svg class="a" style="left:557px;top:570px" width="8" height="8" viewBox="0 0 8 8"><path d="M0.5 7.5L7.5 0.5V7.5z" fill="#201f1e"/></svg>
<div class="a t" style="top:564.5px;line-height:20px;font-size:12px;font-weight:700;color:#201f1e;left:573px;letter-spacing:-0.3px;">SUMMEN</div>
<div class="a" style="left:571px;top:590px;width:1530px;height:99px;background:#fff;box-sizing:border-box;border:1px solid #c8c6c4;"></div>
<div class="a" style="left:572px;top:622px;width:1528px;height:1px;background:#d1d0ce;"></div>
<div class="a t" style="top:597.5px;line-height:20px;font-size:12.5px;color:#201f1e;left:576px;-webkit-text-stroke:0.45px #201f1e;">Label</div>
<div class="a t" style="top:597.5px;line-height:20px;font-size:12.5px;color:#201f1e;right:1609.4px;text-align:right;-webkit-text-stroke:0.45px #201f1e;">Aufträge</div>
<div class="a t" style="top:597.5px;line-height:20px;font-size:12.5px;color:#201f1e;right:1508.6px;text-align:right;-webkit-text-stroke:0.45px #201f1e;">kg</div>
<div class="a t" style="top:597.5px;line-height:20px;font-size:12.5px;color:#201f1e;right:1459.6px;text-align:right;-webkit-text-stroke:0.45px #201f1e;">stp</div>
<div class="a t" style="top:597.5px;line-height:20px;font-size:12.5px;color:#201f1e;right:1358.4px;text-align:right;-webkit-text-stroke:0.45px #201f1e;">m3</div>
<div class="a t" style="top:597.5px;line-height:20px;font-size:12.5px;color:#201f1e;right:1257.6px;text-align:right;-webkit-text-stroke:0.45px #201f1e;">ldm</div>
<div class="a t" style="top:597.5px;line-height:20px;font-size:12.5px;color:#201f1e;right:1209px;text-align:right;-webkit-text-stroke:0.45px #201f1e;">Colli</div>
<div class="a t" style="top:597.5px;line-height:20px;font-size:12.5px;color:#201f1e;right:1159px;text-align:right;-webkit-text-stroke:0.45px #201f1e;">ADR</div>
<svg class="a" style="left:2088px;top:599px" width="4" height="16" viewBox="0 0 4 16"><circle cx="2" cy="2.5" r="1.1" fill="#201f1e"/><circle cx="2" cy="8" r="1.1" fill="#201f1e"/><circle cx="2" cy="13.5" r="1.1" fill="#201f1e"/></svg>
<div class="a" style="left:572px;top:623px;width:1528px;height:33px;background:#d8e3fa;"></div>
<div class="a" style="left:571px;top:623px;width:4px;height:33px;background:#2f5ce0;"></div>
<div class="a t" style="top:630.0px;line-height:20px;font-size:13.5px;color:#323130;left:581px;">Ausgewählt</div>
<div class="a t" style="top:630.0px;line-height:20px;font-size:13.5px;color:#323130;right:1610px;text-align:right;">1</div>
<div class="a t" style="top:630.0px;line-height:20px;font-size:13.5px;color:#323130;right:1509px;text-align:right;">2.000,00</div>
<div class="a t" style="top:630.0px;line-height:20px;font-size:13.5px;color:#323130;right:1460px;text-align:right;">1,50</div>
<div class="a t" style="top:630.0px;line-height:20px;font-size:13.5px;color:#323130;right:1360px;text-align:right;">2,03</div>
<div class="a t" style="top:630.0px;line-height:20px;font-size:13.5px;color:#323130;right:1258px;text-align:right;">1,44</div>
<div class="a t" style="top:630.0px;line-height:20px;font-size:13.5px;color:#323130;right:1209px;text-align:right;">2</div>
<div class="a t" style="top:630.0px;line-height:20px;font-size:13.5px;color:#323130;right:1160px;text-align:right;">0</div>
<div class="a" style="left:541px;top:697px;width:1568px;height:10px;background:#d2d0ce;"></div>
<div class="a" style="left:1309.5px;top:700px;width:13.0px;height:1px;background:#3b3a39;"></div>
<div class="a" style="left:1309.5px;top:703px;width:13.0px;height:1px;background:#3b3a39;"></div>
<div class="a" style="left:541px;top:707px;width:1568px;height:561px;background:#ffffff;"></div>
<div class="a t" style="top:714.5px;line-height:20px;font-size:12px;font-weight:700;color:#201f1e;left:551px;letter-spacing:-0.35px;">DISPONIERTE AUFTRÄGE</div>
<svg class="a" style="left:556.0px;top:749.6px" width="16" height="16" viewBox="0 0 16 16"><path d="M2.5 1.5h11v13h-11z" fill="none" stroke="#3f62ef" stroke-width="1.2" /><path d="M4.5 3.5h7v4h-7zM4.5 9h7v4h-7z" fill="none" stroke="#3f62ef" stroke-width="1.2" /></svg>
<svg class="a" style="left:583.0px;top:749.6px" width="16" height="16" viewBox="0 0 16 16"><path d="M11 3h3v3h-3zM11 10h3v3h-3zM8 8l3-3.5M8 8l3 3.5" fill="none" stroke="#3f62ef" stroke-width="1.2" /><path d="M1 5.5h5M1 8h7M1 10.5h5" fill="none" stroke="#3f62ef" stroke-width="1" stroke-dasharray="1 1.2"/></svg>
<svg class="a" style="left:610.0px;top:749.6px" width="16" height="16" viewBox="0 0 16 16"><path d="M2 3h8M2 3v11h11V7" fill="none" stroke="#3f62ef" stroke-width="1.2" /><path d="M12.7 1.8l1.5 1.5-7.5 7.5-2 .5.5-2z" fill="none" stroke="#3f62ef" stroke-width="1.2" /></svg>
<svg class="a" style="left:637.0px;top:749.6px" width="16" height="16" viewBox="0 0 16 16"><path d="M1.5 3h13v10h-6M1.5 3v10h4M1.5 5.5h13M4.5 1.5v2.5M11.5 1.5v2.5" fill="none" stroke="#3f62ef" stroke-width="1.2" /><path d="M4 8h1M7 8h1M10 8h1M4 10.5h1M7 10.5h1" fill="none" stroke="#3f62ef" stroke-width="1" /><path d="M8 14.5l.4-2 5-5 1.6 1.6-5 5z" fill="none" stroke="#3f62ef" stroke-width="1.2" /></svg>
<svg class="a" style="left:664.0px;top:749.6px" width="16" height="16" viewBox="0 0 16 16"><path d="M3.5 1.5l10 6.5-10 6.5z" fill="none" stroke="#3f62ef" stroke-width="1.2" /></svg>
<svg class="a" style="left:691.0px;top:749.6px" width="16" height="16" viewBox="0 0 16 16"><path d="M3 3h2M11 3h2v8M3 3v11h6" fill="none" stroke="#3f62ef" stroke-width="1.2" /><path d="M6 1.5h4v3H6z" fill="none" stroke="#3f62ef" stroke-width="1.2" /><path d="M9.5 12.5h5M12.5 10.5l2 2-2 2" fill="none" stroke="#3f62ef" stroke-width="1.2" /></svg>
<svg class="a" style="left:718.0px;top:749.6px" width="16" height="16" viewBox="0 0 16 16"><path d="M1.5 3h3v3h-3zM1.5 10h3v3h-3z" fill="none" stroke="#3f62ef" stroke-width="1.2" /><path d="M6.5 4h8M6.5 5.5h5M6.5 11h8M6.5 12.5h5" fill="none" stroke="#3f62ef" stroke-width="1.1" /></svg>
<svg class="a" style="left:745.0px;top:749.6px" width="16" height="16" viewBox="0 0 16 16"><path d="M6 1.5h4v3.5H6zM1.5 11h4v3.5h-4zM10.5 11h4v3.5h-4zM8 5v3M3.5 11V8h9v3" fill="none" stroke="#3f62ef" stroke-width="1.2" /></svg>
<div class="a t" style="top:747.6px;line-height:20px;font-size:11px;color:#3f62ef;left:487.5px;width:600px;text-align:center;">A</div>
<div class="a t" style="top:747.6px;line-height:20px;font-size:11px;color:#3f62ef;left:531px;width:600px;text-align:center;">Z</div>
<div class="a t" style="top:747.6px;line-height:20px;font-size:11px;color:#3f62ef;left:574px;width:600px;text-align:center;">R</div>
<svg class="a" style="left:902.6px;top:749.6px" width="16" height="16" viewBox="0 0 16 16"><path d="M2.5 1.5h9v5M2.5 1.5v13h5M4.5 4.5h5M4.5 7h5M4.5 9.5h3" fill="none" stroke="#3f62ef" stroke-width="1.2" /><path d="M8.5 14.5l.4-2 5-5 1.6 1.6-5 5z" fill="none" stroke="#3f62ef" stroke-width="1.2" /></svg>
<svg class="a" style="left:929.0px;top:749.6px" width="16" height="16" viewBox="0 0 16 16"><path d="M8 1.8a1.6 1.6 0 1 0 .01 0M8 5v3M4.5 8h7l2 6.5h-11zM5.5 11l2.5-3 2.5 3" fill="none" stroke="#3f62ef" stroke-width="1.2" /></svg>
<div class="a t" style="top:747.6px;line-height:20px;font-size:10.6px;color:#3f62ef;left:960px;">Redisponieren</div>
<div class="a" style="left:551px;top:782px;width:1550px;height:377px;background:#fff;box-sizing:border-box;border:1px solid #c8c6c4;"></div>
<div class="a" style="left:552px;top:814px;width:1548px;height:1px;background:#d1d0ce;"></div>
<svg class="a" style="left:562px;top:789px" width="20" height="20" viewBox="0 0 20 20"><circle cx="10" cy="10" r="8.8" fill="none" stroke="#5f5e5c" stroke-width="1.1"/></svg>
<div class="a t" style="top:789.5px;line-height:20px;font-size:12.5px;color:#201f1e;left:604.4px;-webkit-text-stroke:0.45px #201f1e;">Vorgang</div>
<div class="a t" style="top:789.5px;line-height:20px;font-size:12.5px;color:#201f1e;left:702.4px;-webkit-text-stroke:0.45px #201f1e;">Ladedatum</div>
<div class="a t" style="top:789.5px;line-height:20px;font-size:12.5px;color:#201f1e;left:865px;-webkit-text-stroke:0.45px #201f1e;">Ladedatum Auftrag</div>
<div class="a t" style="top:789.5px;line-height:20px;font-size:12.5px;color:#201f1e;left:1014.4px;-webkit-text-stroke:0.45px #201f1e;">Stell...</div>
<div class="a t" style="top:789.5px;line-height:20px;font-size:12.5px;color:#201f1e;left:1164px;-webkit-text-stroke:0.45px #201f1e;">Entl...</div>
<div class="a t" style="top:789.5px;line-height:20px;font-size:12.5px;color:#201f1e;left:1208px;-webkit-text-stroke:0.45px #201f1e;">G...</div>
<div class="a t" style="top:789.5px;line-height:20px;font-size:12.5px;color:#201f1e;left:1241px;-webkit-text-stroke:0.45px #201f1e;">Von Straße</div>
<div class="a t" style="top:789.5px;line-height:20px;font-size:12.5px;color:#201f1e;left:1462px;-webkit-text-stroke:0.45px #201f1e;">Von Land</div>
<div class="a t" style="top:789.5px;line-height:20px;font-size:12.5px;color:#201f1e;left:1623px;-webkit-text-stroke:0.45px #201f1e;">Von PLZ</div>
<div class="a t" style="top:789.5px;line-height:20px;font-size:12.5px;color:#201f1e;left:1784px;-webkit-text-stroke:0.45px #201f1e;">Von Ort</div>
<div class="a t" style="top:789.5px;line-height:20px;font-size:12.5px;color:#201f1e;left:2005px;-webkit-text-stroke:0.45px #201f1e;">Nach Straße</div>
<div class="a t" style="top:789.5px;line-height:20px;font-size:12.5px;color:#201f1e;right:1343.2px;text-align:right;-webkit-text-stroke:0.45px #201f1e;">Gewicht</div>
<svg class="a" style="left:2088px;top:791px" width="4" height="16" viewBox="0 0 4 16"><circle cx="2" cy="2.5" r="1.1" fill="#201f1e"/><circle cx="2" cy="8" r="1.1" fill="#201f1e"/><circle cx="2" cy="13.5" r="1.1" fill="#201f1e"/></svg>
<div class="a" style="left:552px;top:815px;width:1548px;height:33px;background:#d8e3fa;"></div>
<div class="a" style="left:552px;top:815px;width:4px;height:33px;background:#2f5ce0;"></div>
<svg class="a" style="left:562px;top:821.5px" width="20" height="20" viewBox="0 0 20 20"><circle cx="10" cy="10" r="8.8" fill="none" stroke="#3b3a39" stroke-width="1.1"/><path d="M5.5 10.3l3 3 6-6" fill="none" stroke="#3b3a39" stroke-width="1.1"/></svg>
<div class="a t" style="top:821.5px;line-height:20px;font-size:13.5px;color:#323130;left:605px;">Abholung</div>
<div class="a t" style="top:821.5px;line-height:20px;font-size:13.5px;color:#323130;left:703px;">14.10.2025</div>
<div class="a t" style="top:821.5px;line-height:20px;font-size:13.5px;color:#323130;left:866px;">14.10.2025</div>
<div class="a t" style="top:821.5px;line-height:20px;font-size:13.5px;color:#323130;right:1446px;text-align:right;">1,20</div>
<div class="a t" style="top:821.5px;line-height:20px;font-size:13.5px;color:#323130;right:1344px;text-align:right;">270,00</div>
<div class="a t" style="top:821.5px;line-height:20px;font-size:13.5px;color:#323130;left:1242px;">Aue70</div>
<div class="a t" style="top:821.5px;line-height:20px;font-size:13.5px;color:#3a5bd9;left:1463px;">DEU</div>
<div class="a t" style="top:821.5px;line-height:20px;font-size:13.5px;color:#3a5bd9;left:1624px;">42103</div>
<div class="a t" style="top:821.5px;line-height:20px;font-size:13.5px;color:#323130;left:1785px;">Wuppertal</div>
<div class="a t" style="left:2006px;top:821.5px;width:94px;overflow:hidden;line-height:20px;font-size:13.5px;color:#323130;font-weight:400">Stromstr.</div>
<div class="a t" style="top:854.5px;line-height:20px;font-size:13.5px;color:#323130;left:605px;">Zustellung</div>
<div class="a t" style="top:854.5px;line-height:20px;font-size:13.5px;color:#323130;left:703px;">14.10.2025</div>
<div class="a t" style="top:854.5px;line-height:20px;font-size:13.5px;color:#323130;left:866px;">14.10.2025</div>
<div class="a t" style="top:854.5px;line-height:20px;font-size:13.5px;color:#323130;right:1446px;text-align:right;">1,20</div>
<div class="a t" style="top:854.5px;line-height:20px;font-size:13.5px;color:#323130;right:1344px;text-align:right;">270,00</div>
<div class="a t" style="top:854.5px;line-height:20px;font-size:13.5px;color:#323130;left:1242px;">Aue70</div>
<div class="a t" style="top:854.5px;line-height:20px;font-size:13.5px;color:#323130;left:1463px;">DEU</div>
<div class="a t" style="top:854.5px;line-height:20px;font-size:13.5px;color:#323130;left:1624px;">42103</div>
<div class="a t" style="top:854.5px;line-height:20px;font-size:13.5px;color:#323130;left:1785px;">Wuppertal</div>
<div class="a t" style="left:2006px;top:854.5px;width:94px;overflow:hidden;line-height:20px;font-size:13.5px;color:#323130;font-weight:400">Stromstr.</div>
<div class="a t" style="top:887.5px;line-height:20px;font-size:13.5px;color:#323130;left:605px;">Abholung</div>
<div class="a t" style="top:887.5px;line-height:20px;font-size:13.5px;color:#323130;left:703px;">14.10.2025</div>
<div class="a t" style="top:887.5px;line-height:20px;font-size:13.5px;color:#323130;left:866px;">14.10.2025</div>
<div class="a t" style="top:887.5px;line-height:20px;font-size:13.5px;color:#323130;right:1446px;text-align:right;">0,10</div>
<div class="a t" style="top:887.5px;line-height:20px;font-size:13.5px;color:#323130;right:1344px;text-align:right;">100,00</div>
<div class="a t" style="top:887.5px;line-height:20px;font-size:13.5px;color:#323130;left:1242px;">Stromstr. 1</div>
<div class="a t" style="top:887.5px;line-height:20px;font-size:13.5px;color:#323130;left:1463px;">DEU</div>
<div class="a t" style="top:887.5px;line-height:20px;font-size:13.5px;color:#323130;left:1624px;">40221</div>
<div class="a t" style="top:887.5px;line-height:20px;font-size:13.5px;color:#323130;left:1785px;">Düsseldorf</div>
<div class="a t" style="left:2006px;top:887.5px;width:94px;overflow:hidden;line-height:20px;font-size:13.5px;color:#323130;font-weight:400">Störtebeker Ufer</div>
<div class="a t" style="top:920.5px;line-height:20px;font-size:13.5px;color:#323130;left:605px;">Zustellung</div>
<div class="a t" style="top:920.5px;line-height:20px;font-size:13.5px;color:#323130;left:703px;">22.10.2025</div>
<div class="a t" style="top:920.5px;line-height:20px;font-size:13.5px;color:#323130;left:866px;">22.10.2025</div>
<div class="a t" style="top:920.5px;line-height:20px;font-size:13.5px;color:#323130;right:1446px;text-align:right;">1,50</div>
<div class="a t" style="top:920.5px;line-height:20px;font-size:13.5px;color:#323130;right:1344px;text-align:right;">2.000,00</div>
<div class="a t" style="top:920.5px;line-height:20px;font-size:13.5px;color:#323130;left:1242px;">SCHUCKERTSTR. 5</div>
<div class="a t" style="top:920.5px;line-height:20px;font-size:13.5px;color:#323130;left:1463px;">DEU</div>
<div class="a t" style="top:920.5px;line-height:20px;font-size:13.5px;color:#323130;left:1624px;">48153</div>
<div class="a t" style="top:920.5px;line-height:20px;font-size:13.5px;color:#323130;left:1785px;">Münster</div>
<div class="a t" style="left:2006px;top:920.5px;width:94px;overflow:hidden;line-height:20px;font-size:13.5px;color:#323130;font-weight:400">Vom-Stein-Straße</div>
<div class="a" style="left:592px;top:783px;width:1px;height:163px;background:#e1dfdd;"></div>
<div class="a" style="left:694px;top:1147px;width:544px;height:8px;background:#c2c2c2;border-radius:4px;"></div>
<svg class="a" style="left:557px;top:1182px" width="8" height="8" viewBox="0 0 8 8"><path d="M0.5 7.5L7.5 0.5V7.5z" fill="#201f1e"/></svg>
<div class="a t" style="top:1176.0px;line-height:20px;font-size:12px;font-weight:700;color:#201f1e;left:573px;letter-spacing:-0.3px;">SUMMEN</div>
<div class="a" style="left:571px;top:1203px;width:1530px;height:58px;background:#fff;box-sizing:border-box;border:1px solid #c8c6c4;"></div>
<div class="a" style="left:572px;top:1234px;width:1528px;height:1px;background:#c8c6c4;"></div>
<div class="a t" style="top:1209.5px;line-height:20px;font-size:12.5px;color:#201f1e;right:1830.2px;text-align:right;-webkit-text-stroke:0.45px #201f1e;">Aufträge</div>
<div class="a t" style="top:1209.5px;line-height:20px;font-size:12.5px;color:#201f1e;right:1729.6px;text-align:right;-webkit-text-stroke:0.45px #201f1e;">kg</div>
<div class="a t" style="top:1209.5px;line-height:20px;font-size:12.5px;color:#201f1e;right:1680.6px;text-align:right;-webkit-text-stroke:0.45px #201f1e;">stp</div>
<div class="a t" style="top:1209.5px;line-height:20px;font-size:12.5px;color:#201f1e;right:1580px;text-align:right;-webkit-text-stroke:0.45px #201f1e;">m3</div>
<div class="a t" style="top:1209.5px;line-height:20px;font-size:12.5px;color:#201f1e;right:1478.3px;text-align:right;-webkit-text-stroke:0.45px #201f1e;">ldm</div>
<div class="a t" style="top:1209.5px;line-height:20px;font-size:12.5px;color:#201f1e;right:1429.6px;text-align:right;-webkit-text-stroke:0.45px #201f1e;">Colli</div>
<div class="a t" style="top:1209.5px;line-height:20px;font-size:12.5px;color:#201f1e;right:1380.2px;text-align:right;-webkit-text-stroke:0.45px #201f1e;">ADR</div>
<svg class="a" style="left:2089px;top:1211px" width="4" height="16" viewBox="0 0 4 16"><circle cx="2" cy="2.5" r="1.1" fill="#201f1e"/><circle cx="2" cy="8" r="1.1" fill="#201f1e"/><circle cx="2" cy="13.5" r="1.1" fill="#201f1e"/></svg>
<div class="a" style="left:572px;top:1235px;width:1513px;height:25px;background:#d8e3fa;"></div>
<div class="a" style="left:571px;top:1235px;width:4px;height:25px;background:#2f5ce0;"></div>
<div class="a t" style="top:1234.5px;line-height:20px;font-size:13.5px;color:#323130;right:1831px;text-align:right;">4</div>
<div class="a t" style="top:1234.5px;line-height:20px;font-size:13.5px;color:#323130;right:1730px;text-align:right;">2.640,00</div>
<div class="a t" style="top:1234.5px;line-height:20px;font-size:13.5px;color:#323130;right:1682px;text-align:right;">4,00</div>
<div class="a t" style="top:1234.5px;line-height:20px;font-size:13.5px;color:#323130;right:1581px;text-align:right;">2,15</div>
<div class="a t" style="top:1234.5px;line-height:20px;font-size:13.5px;color:#323130;right:1480px;text-align:right;">3,84</div>
<div class="a t" style="top:1234.5px;line-height:20px;font-size:13.5px;color:#323130;right:1430px;text-align:right;">9</div>
<div class="a t" style="top:1234.5px;line-height:20px;font-size:13.5px;color:#323130;right:1381px;text-align:right;">0</div>
<div class="a" style="left:2089px;top:1235px;width:7px;height:21px;background:#c2c2c2;border-radius:3.5px;"></div>
<div class="a" style="left:2119px;top:164px;width:372px;height:533px;background:#ffffff;"></div>
<div class="a t" style="top:164.5px;line-height:15px;font-size:11px;font-weight:700;color:#3b60e4;left:2119px;">Auftrag 100038756</div>
<div class="a t" style="top:164.5px;line-height:15px;font-size:10.6px;font-weight:700;color:#3b60e4;left:2266.4px;">Ereignishistorie</div>
<div class="a t" style="top:164.5px;line-height:15px;font-size:10.6px;font-weight:700;color:#3b60e4;right:7px;text-align:right;">Redisponieren</div>
<div class="a t" style="left:2119px;top:194.5px;line-height:15px;font-size:10.4px;font-weight:700;color:#3b60e4"><span style="color:#201f1e">[</span>Transportschritte<span style="color:#201f1e">][</span>Auftrag Drucken<span style="color:#201f1e">][</span>Ereignis erfassen<span style="color:#201f1e">]</span></div>
<div class="a t" style="top:239.5px;line-height:15px;font-size:10.6px;font-weight:700;color:#201f1e;left:2119px;">Adressrolle</div>
<div class="a t" style="top:239.5px;line-height:15px;font-size:10.6px;font-weight:700;color:#201f1e;left:2192px;">Name</div>
<div class="a t" style="top:239.5px;line-height:15px;font-size:10.6px;font-weight:700;color:#201f1e;left:2305.4px;">Straße</div>
<div class="a t" style="top:239.5px;line-height:15px;font-size:10.6px;font-weight:700;color:#201f1e;left:2357.5px;">Land</div>
<div class="a t" style="top:239.5px;line-height:15px;font-size:10.6px;font-weight:700;color:#201f1e;left:2388px;">PLZ</div>
<div class="a t" style="top:239.5px;line-height:15px;font-size:10.6px;font-weight:700;color:#201f1e;left:2426px;">Ort</div>
<div class="a t" style="top:254.9px;line-height:15px;font-size:10.6px;color:#201f1e;left:2119px;">Auftraggeber</div>
<div class="a t" style="top:254.9px;line-height:15px;font-size:10.6px;color:#201f1e;left:2305.4px;">Aue70</div>
<div class="a t" style="top:254.9px;line-height:15px;font-size:10.6px;color:#201f1e;left:2357.5px;">DEU</div>
<div class="a t" style="top:254.9px;line-height:15px;font-size:10.6px;color:#201f1e;left:2388px;">42103</div>
<div class="a t" style="top:254.9px;line-height:15px;font-size:10.6px;color:#201f1e;left:2426px;">Wuppertal</div>
<div class="a t" style="top:269.9px;line-height:15px;font-size:10.6px;color:#201f1e;left:2119px;">Versender</div>
<div class="a t" style="top:269.9px;line-height:15px;font-size:10.6px;color:#201f1e;left:2305.4px;">Aue70</div>
<div class="a t" style="top:269.9px;line-height:15px;font-size:10.6px;color:#201f1e;left:2357.5px;">DEU</div>
<div class="a t" style="top:269.9px;line-height:15px;font-size:10.6px;color:#201f1e;left:2388px;">42103</div>
<div class="a t" style="top:269.9px;line-height:15px;font-size:10.6px;color:#201f1e;left:2426px;">Wuppertal</div>
<div class="a t" style="top:284.9px;line-height:15px;font-size:10.6px;color:#201f1e;left:2119px;">Empfänger</div>
<div class="a t" style="top:284.9px;line-height:15px;font-size:10.6px;color:#201f1e;left:2305.4px;">Stromstr.</div>
<div class="a t" style="top:284.9px;line-height:15px;font-size:10.6px;color:#201f1e;left:2357.5px;">DEU</div>
<div class="a t" style="top:284.9px;line-height:15px;font-size:10.6px;color:#201f1e;left:2388px;">40221</div>
<div class="a t" style="top:284.9px;line-height:15px;font-size:10.6px;color:#201f1e;left:2426px;">Düsseldorf</div>
<div class="a t" style="top:314.5px;line-height:15px;font-size:10.6px;font-weight:700;color:#201f1e;left:2119px;">Ladezeiten</div>
<div class="a t" style="top:329.5px;line-height:15px;font-size:10.6px;color:#201f1e;left:2119px;">Ladedatum</div>
<div class="a t" style="top:329.5px;line-height:15px;font-size:10.1px;color:#201f1e;left:2184px;">: Plan14.10.2025</div>
<div class="a t" style="top:329.5px;line-height:15px;font-size:10.1px;color:#201f1e;left:2266px;">1: 00:00:00 - 00:00:00</div>
<div class="a t" style="top:329.5px;line-height:15px;font-size:10.1px;color:#201f1e;left:2371.5px;">2: 00:00:00 - 00:00:00</div>
<div class="a t" style="top:344.5px;line-height:15px;font-size:10.6px;color:#201f1e;left:2119px;">Entladedatum: Plan</div>
<div class="a t" style="top:344.5px;line-height:15px;font-size:10.1px;color:#201f1e;left:2266px;">1: 00:00:00 - 00:00:00</div>
<div class="a t" style="top:344.5px;line-height:15px;font-size:10.1px;color:#201f1e;left:2371.5px;">2: 00:00:00 - 00:00:00</div>
<div class="a t" style="top:374.5px;line-height:15px;font-size:10.6px;font-weight:700;color:#201f1e;left:2119px;">Eigenschaften</div>
<div class="a t" style="top:404.5px;line-height:15px;font-size:10.6px;font-weight:700;color:#201f1e;left:2119px;">Einheiten</div>
<div class="a t" style="top:404.5px;line-height:15px;font-size:10.6px;font-weight:700;color:#201f1e;left:2177.6px;">Inhalt</div>
<div class="a t" style="top:404.5px;line-height:15px;font-size:10.6px;font-weight:700;color:#201f1e;left:2241px;">Gewicht</div>
<div class="a t" style="top:404.5px;line-height:15px;font-size:10.6px;font-weight:700;color:#201f1e;left:2356.7px;">Abmessungen</div>
<div class="a t" style="top:419.5px;line-height:15px;font-size:10.6px;color:#201f1e;right:332.5px;text-align:right;">2 EP</div>
<div class="a t" style="top:419.5px;line-height:15px;font-size:10.6px;color:#201f1e;left:2177.6px;">Ware</div>
<div class="a t" style="top:419.5px;line-height:15px;font-size:10.1px;color:#201f1e;right:217px;text-align:right;">250,00kg</div>
<div class="a t" style="top:419.5px;line-height:15px;font-size:10.1px;color:#201f1e;right:71.19999999999982px;text-align:right;">135,00cm x 85,00cm x 0,00cm</div>
<div class="a t" style="top:434.5px;line-height:15px;font-size:10.6px;color:#201f1e;right:332.5px;text-align:right;">1 KT</div>
<div class="a t" style="top:434.5px;line-height:15px;font-size:10.6px;color:#201f1e;left:2177.6px;">Ware</div>
<div class="a t" style="top:434.5px;line-height:15px;font-size:10.1px;color:#201f1e;right:217px;text-align:right;">20,00kg</div>
<div class="a t" style="top:434.5px;line-height:15px;font-size:10.1px;color:#201f1e;right:71.19999999999982px;text-align:right;">0,00cm x 0,00cm x 0,00cm</div>
<div class="a t" style="top:464.5px;line-height:15px;font-size:10.6px;color:#201f1e;left:2119px;">Abholung</div>
<div class="a t" style="top:464.5px;line-height:15px;font-size:10.6px;color:#201f1e;left:2213px;">Eingang eig. ULA</div>
<div class="a t" style="top:464.5px;line-height:15px;font-size:10.6px;color:#201f1e;left:2303.8px;">Ausgang eig. ULA</div>
<div class="a t" style="top:464.5px;line-height:15px;font-size:10.6px;color:#201f1e;left:2396px;">Zustellung</div>
<div class="a" style="left:2119px;top:697px;width:372px;height:10px;background:#d2d0ce;"></div>
<div class="a" style="left:2289.5px;top:700px;width:13.0px;height:1px;background:#3b3a39;"></div>
<div class="a" style="left:2289.5px;top:703px;width:13.0px;height:1px;background:#3b3a39;"></div>
<div class="a" style="left:2119px;top:707px;width:372px;height:561px;background:#ffffff;"></div>
<div class="a" style="left:2112px;top:727px;width:1px;height:12px;background:#605e5c;"></div>
<div class="a" style="left:2114.5px;top:727px;width:1.0px;height:12px;background:#605e5c;"></div>
<div class="a t" style="top:712.5px;line-height:15px;font-size:10.6px;font-weight:700;color:#201f1e;left:2119px;">Tournummer/-name:</div>
<div class="a t" style="top:712.5px;line-height:15px;font-size:11px;font-weight:700;color:#3b60e4;left:2226px;">T00025982 / 7,5t EN-AX 2000</div>
<div class="a t" style="top:727.5px;line-height:15px;font-size:10.6px;font-weight:700;color:#201f1e;left:2119px;">Planungsdatum</div>
<div class="a t" style="top:727.5px;line-height:15px;font-size:10.6px;color:#201f1e;left:2220.5px;">: 23.10.2025</div>
<div class="a t" style="top:742.5px;line-height:15px;font-size:10.6px;font-weight:700;color:#201f1e;left:2119px;">Planungsstatus</div>
<div class="a t" style="top:742.5px;line-height:15px;font-size:10.6px;color:#201f1e;left:2220.5px;">: In Planung</div>
<div class="a t" style="top:757.5px;line-height:15px;font-size:10.6px;font-weight:700;color:#201f1e;left:2119px;">Dispo-Gebiet</div>
<div class="a t" style="top:757.5px;line-height:15px;font-size:10.6px;color:#201f1e;left:2220.5px;">: nv</div>
<div class="a t" style="top:788.0px;line-height:15px;font-size:10.6px;font-weight:700;color:#201f1e;left:2119px;">Fahrzeug</div>
<div class="a t" style="top:791.5px;line-height:15px;font-size:10.6px;color:#201f1e;left:2182.7px;">:</div>
<svg class="a" style="left:2188px;top:787px" width="16" height="15" viewBox="0 0 24 22"><rect x="8.9" y="0.3" width="14.6" height="15.6" rx="1.6" fill="#787878"/><path d="M1.6 16.5V9.6L5.2 5.1Q5.9 4.1 7.1 4.1H9.5V16.5z" fill="#787878"/><rect x="8" y="12" width="15.5" height="4.5" fill="#787878"/><rect x="0" y="14.3" width="3" height="2.2" fill="#787878"/><path d="M3.1 10.2L6 6.3H8.3V10.2z" fill="#fff"/><circle cx="6" cy="16.2" r="3.2" fill="#787878"/><circle cx="17.7" cy="16.2" r="3.2" fill="#787878"/><circle cx="6" cy="16.2" r="1.5" fill="#fff"/><circle cx="17.7" cy="16.2" r="1.5" fill="#fff"/></svg>
<div class="a t" style="top:791.5px;line-height:15px;font-size:10.6px;color:#201f1e;left:2206px;">/ 7,5 to / EN-AX 2000</div>
<div class="a t" style="top:806.5px;line-height:15px;font-size:10.6px;font-weight:700;color:#201f1e;left:2119px;">Fahrer</div>
<div class="a t" style="top:806.5px;line-height:15px;font-size:10.6px;color:#201f1e;left:2182.7px;">:</div>
<div class="a t" style="top:821.5px;line-height:15px;font-size:10px;font-weight:700;color:#201f1e;left:2119px;">Beladestatus:</div>
<div class="a t" style="top:821.5px;line-height:15px;font-size:10.6px;color:#201f1e;left:2187.6px;">Offen 1 / 0 / 0</div>
<div class="a t" style="top:851.5px;line-height:15px;font-size:10.2px;font-weight:700;color:#201f1e;left:2119px;">Adresse Frachtführer</div>
<div class="a t" style="top:851.5px;line-height:15px;font-size:10.6px;font-weight:700;color:#201f1e;left:2225px;">:</div>
<div class="a t" style="top:851.5px;line-height:15px;font-size:10.6px;font-weight:700;color:#3b60e4;left:2231.5px;">Brumby, DEU 40699 Erkrath</div>
<div class="a t" style="top:866.5px;line-height:15px;font-size:10.6px;font-weight:700;color:#201f1e;left:2119px;">Telefon Fahrzeug</div>
<div class="a t" style="top:866.5px;line-height:15px;font-size:10.6px;color:#201f1e;left:2226px;">:</div>
<div class="a t" style="top:881.5px;line-height:15px;font-size:10.6px;font-weight:700;color:#201f1e;left:2119px;">Telefon Unternehmer:</div>
<div class="a t" style="top:911.5px;line-height:15px;font-size:10.6px;font-weight:700;color:#201f1e;left:2119px;">Eigenschaften</div>
<svg class="a" style="left:2120px;top:927px" width="15" height="14" viewBox="0 0 18 17"><path d="M9 1.3L17 15.6H1z" fill="none" stroke="#d08a2c" stroke-width="1.4" stroke-linejoin="round"/><path d="M9 6v5.2" stroke="#d08a2c" stroke-width="1.5"/><circle cx="9" cy="13.3" r="1" fill="#d08a2c"/></svg>
<div class="a t" style="top:926.5px;line-height:15px;font-size:10.6px;color:#201f1e;left:2145px;">ADR-Schein</div>
<svg class="a" style="left:2119px;top:945px" width="16" height="15" viewBox="0 0 24 19"><path d="M13.6 0h9.4v13.8a4.7 4.7 0 0 1-9.4 0z" fill="#9b9b9b"/><circle cx="19.3" cy="13.8" r="1.5" fill="#fff"/><path d="M1 15.6L14 12l.6 2.2L1.6 17.8z" fill="#9b9b9b"/><path d="M1.5 5.3l3.3-.8.7 2.4 2-.5-.6-2.4 3.3-.8 2 7.8-8.7 2.2z" fill="#9b9b9b"/></svg>
<div class="a t" style="top:945.5px;line-height:15px;font-size:10.6px;color:#201f1e;left:2145px;">Hebebühne-Fahrzeug</div>
<svg class="a" style="left:2122.5px;top:964px" width="8" height="15" viewBox="0 0 11 19"><rect x="0.4" y="0.3" width="10.2" height="18.6" rx="0.8" fill="#c9372c"/><path d="M2.2 4.5Q9.8 2.5 9.5 8L4.5 15.8M2.3 7.5v8.3h4.2" fill="none" stroke="#f3d0cc" stroke-width="1"/></svg>
<div class="a t" style="top:964.5px;line-height:15px;font-size:10.6px;color:#201f1e;left:2145px;">ADR Ausrüstung</div>
<div class="a t" style="top:998.5px;line-height:15px;font-size:10.6px;color:#201f1e;left:2119px;">Startadresse</div>
<div class="a t" style="top:998.5px;line-height:15px;font-size:10.6px;color:#201f1e;left:2294px;">Zieladresse</div>
<div class="a t" style="top:1013.5px;line-height:15px;font-size:10.6px;font-weight:700;color:#201f1e;left:2119px;">Von Name</div>
<div class="a t" style="top:1013.5px;line-height:15px;font-size:10.6px;color:#201f1e;left:2193px;">:ANAXCO Transport</div>
<div class="a t" style="top:1013.5px;line-height:15px;font-size:10.6px;font-weight:700;color:#201f1e;left:2294px;">Nach Name</div>
<div class="a t" style="top:1013.5px;line-height:15px;font-size:10.6px;color:#201f1e;left:2368px;">:ANAXCO Transport</div>
<div class="a t" style="top:1028.5px;line-height:15px;font-size:10.6px;font-weight:700;color:#201f1e;left:2119px;">Von Straße</div>
<div class="a t" style="top:1028.5px;line-height:15px;font-size:10.6px;color:#201f1e;left:2193px;">:Vom-Stein-Straße 6</div>
<div class="a t" style="top:1028.5px;line-height:15px;font-size:10.6px;font-weight:700;color:#201f1e;left:2294px;">Nach Straße</div>
<div class="a t" style="top:1028.5px;line-height:15px;font-size:10.6px;color:#201f1e;left:2368px;">:Vom-Stein-Straße 6</div>
<div class="a t" style="top:1043.5px;line-height:15px;font-size:10.6px;font-weight:700;color:#201f1e;left:2119px;">Von Land</div>
<div class="a t" style="top:1043.5px;line-height:15px;font-size:10.6px;color:#201f1e;left:2193px;">:DEU</div>
<div class="a t" style="top:1043.5px;line-height:15px;font-size:10.6px;font-weight:700;color:#201f1e;left:2294px;">Nach Land</div>
<div class="a t" style="top:1043.5px;line-height:15px;font-size:10.6px;color:#201f1e;left:2368px;">:DEU</div>
<div class="a t" style="top:1058.5px;line-height:15px;font-size:10.6px;font-weight:700;color:#201f1e;left:2119px;">Von PLZ</div>
<div class="a t" style="top:1058.5px;line-height:15px;font-size:10.6px;color:#201f1e;left:2193px;">:45549</div>
<div class="a t" style="top:1058.5px;line-height:15px;font-size:10.6px;font-weight:700;color:#201f1e;left:2294px;">Nach PLZ</div>
<div class="a t" style="top:1058.5px;line-height:15px;font-size:10.6px;color:#201f1e;left:2368px;">:45549</div>
<div class="a t" style="top:1073.5px;line-height:15px;font-size:10.6px;font-weight:700;color:#201f1e;left:2119px;">Von Ort</div>
<div class="a t" style="top:1073.5px;line-height:15px;font-size:10.6px;color:#201f1e;left:2193px;">:Sprockhövel</div>
<div class="a t" style="top:1073.5px;line-height:15px;font-size:10.6px;font-weight:700;color:#201f1e;left:2294px;">Nach Ort</div>
<div class="a t" style="top:1073.5px;line-height:15px;font-size:10.6px;color:#201f1e;left:2368px;">:Sprockhövel</div>
<div class="a t" style="top:1095.0px;line-height:20px;font-size:12px;font-weight:700;color:#6f6f6f;left:2005px;width:600px;text-align:center;">Kapazitätsauslastung</div>
<svg class="a" style="left:2119px;top:1120px" width="372" height="70" viewBox="0 0 372 70"><rect x="0" y="14" width="372" height="53.7" fill="#a9afba"/><rect x="0" y="7" width="115.5" height="4.2" fill="#5bbfc0"/><rect x="1.5" y="8.6" width="113" height="1.2" fill="#8ed3d3"/><rect x="112.7" y="14.8" width="75" height="2.2" fill="#5bbfc0"/><rect x="184.4" y="7" width="74.5" height="4.2" fill="#5bbfc0"/><rect x="186" y="8.6" width="72" height="1.2" fill="#8ed3d3"/><rect x="259.5" y="5.2" width="111.5" height="6.6" fill="#9fdcdc" stroke="#5bbfc0" stroke-width="2"/><rect x="0" y="7" width="2" height="60.7" fill="#5bbfc0"/><rect x="0" y="11.2" width="372" height="2.8" fill="#f2587c"/><rect x="370.5" y="11.2" width="1.5" height="56.5" fill="#f2587c"/></svg>
<div class="a" style="left:0px;top:1268px;width:2498px;height:1px;background:#bfc5cc;"></div>
<div class="a" style="left:0px;top:1269px;width:2498px;height:2px;background:#e6eaee;"></div>
</body></html>
